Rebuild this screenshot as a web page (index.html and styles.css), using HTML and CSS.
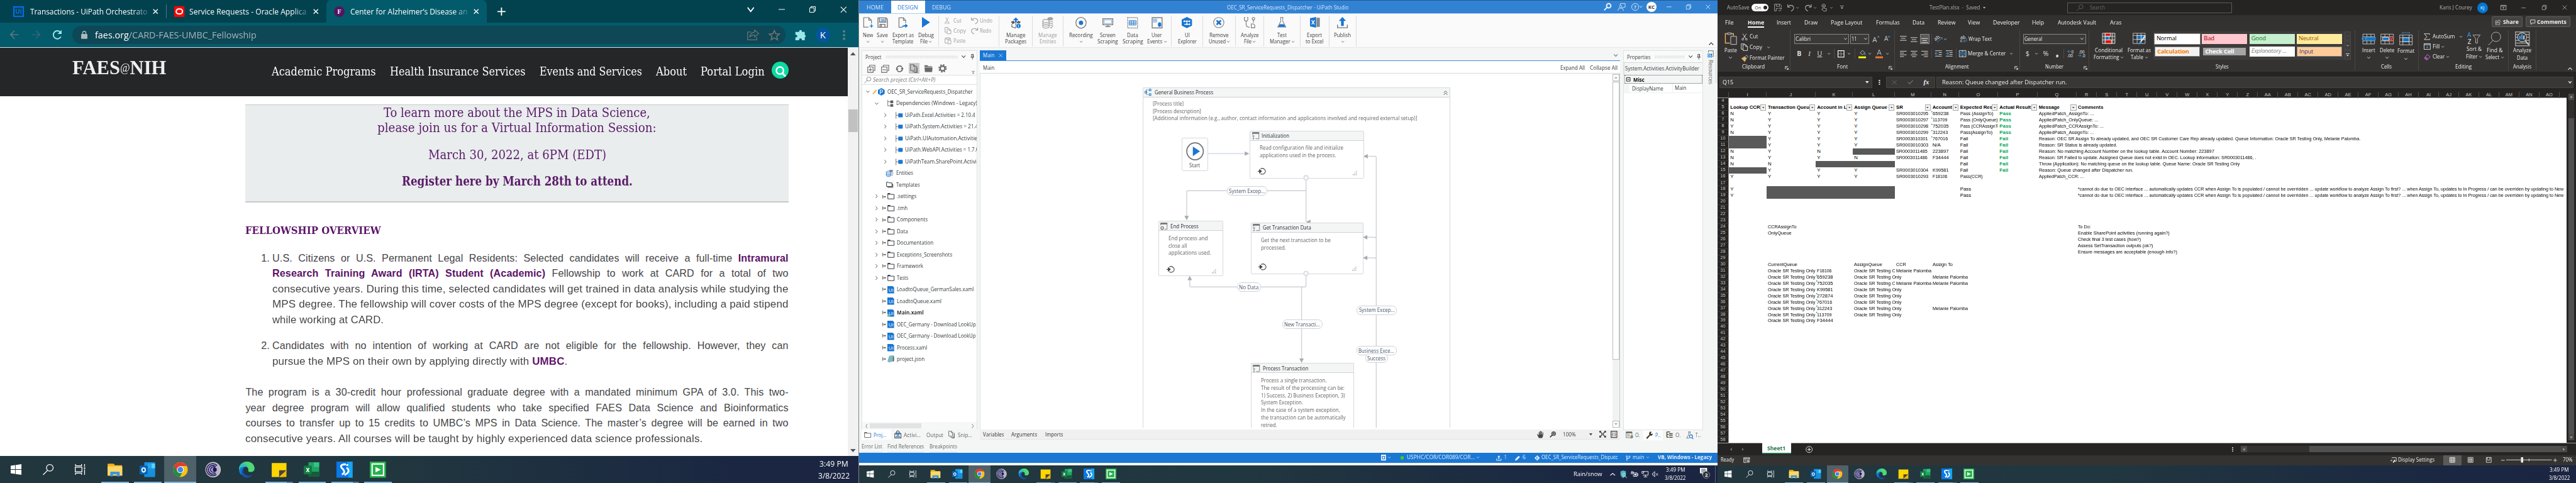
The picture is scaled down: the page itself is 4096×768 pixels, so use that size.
FILE: index.html
```html
<!DOCTYPE html>
<html lang="en">
<head>
<meta charset="utf-8">
<title>Desktop</title>
<link rel="stylesheet" href="styles.css">
</head>
<body>
<main class="desk">

<section class="screen chrome">
  <div class="tabs">
    <i data-i="uitab" data-w="24" data-h="24" data-m="30"></i><span class="f fade" data-w="262" data-m="13">Transactions - UiPath Orchestrato</span><i data-i="x" data-w="12" data-h="12" data-m="13" class="bold"></i>
    <span class="tabsep"></span>
    <i data-i="oracle" data-w="23" data-h="24" data-m="17"></i><span class="f fade" data-w="262" data-m="11">Service Requests - Oracle Applica</span><i data-i="x" data-w="12" data-h="12" data-m="14" class="bold"></i>
    <div class="tab-on"><span class="fav">F</span><span class="f fade" data-w="262" data-m="12">Center for Alzheimer’s Disease an</span><i data-i="x" data-w="12" data-h="12" data-m="14" class="bold"></i></div>
    <i data-i="plus" data-w="18" data-h="18" data-m="24"></i>
    <div class="winctl"><i data-i="chev" data-w="16" data-h="12"></i><i data-i="min" data-w="14" data-h="14"></i><i data-i="restore" data-w="14" data-h="14"></i><i data-i="x" data-w="15" data-h="15"></i></div>
  </div>
  <div class="tools">
    <i class="dim" data-i="back" data-w="20" data-h="20" data-m="23"></i><i class="dimmer" data-i="fwd" data-w="20" data-h="20" data-m="28"></i><i class="mint" data-i="reload" data-w="24" data-h="24" data-m="26"></i>
    <div class="url"><i data-i="lock" data-w="14" data-h="18" data-m="20"></i><span class="f" data-w="361" data-m="16"><span class="host">faes.org</span>/CARD-FAES-UMBC_Fellowship</span>
      <div class="urlend"><i data-i="share" data-w="27" data-h="24"></i><i data-i="star" data-w="26" data-h="24"></i></div></div>
    <i class="mint" data-i="puzzle" data-w="25" data-h="25" data-m="20"></i><span class="kcirc">K</span><i class="dim" data-i="dots" data-w="6" data-h="22" data-m="28"></i>
  </div>
  <div class="view">
    <div class="page">
      <header class="faes">
        <span class="f logo" data-w="210" data-m="162">FAES<span class="at">@</span>NIH</span>
        <span class="f" data-w="233" data-m="235">Academic Programs</span><span class="f" data-w="303" data-m="32">Health Insurance Services</span><span class="f" data-w="229" data-m="32">Events and Services</span><span class="f" data-w="69" data-m="31">About</span><span class="f" data-w="143" data-m="31">Portal Login</span>
        <i class="find" data-i="findc" data-w="38" data-h="38" data-m="16"></i>
      </header>
      <div class="promo">
        <p><span class="f" data-w="596">To learn more about the MPS in Data Science,</span><br><span class="f" data-w="624">please join us for a Virtual Information Session:</span></p>
        <p><span class="f" data-w="398">March 30, 2022, at 6PM (EDT)</span></p>
        <p><b class="f" data-w="516">Register here by March 28th to attend.</b></p>
      </div>
      <h2><span class="f" data-w="303">FELLOWSHIP OVERVIEW</span></h2>
      <ol class="terms">
        <li><p class="j">U.S. Citizens or U.S. Permanent Legal Residents: Selected candidates will receive a full-time <b>Intramural</b></p><p class="j"><b>Research Training Award (IRTA) Student (Academic)</b> Fellowship to work at CARD for a total of two</p><p class="j"><span class="f" data-w="1154">consecutive years. During this time, selected candidates will get trained in data analysis while studying the</span></p><p class="j"><span class="f" data-w="1154">MPS degree. The fellowship will cover costs of the MPS degree (except for books), including a paid stipend</span></p><p><span class="f" data-w="249">while working at CARD.</span></p></li>
        <li><p class="j">Candidates with no intention of working at CARD are not eligible for the fellowship. However, they can</p><p><span class="f" data-w="660">pursue the MPS on their own by applying directly with <b>UMBC</b>.</span></p></li>
      </ol>
      <div class="para"><p class="j">The program is a 30-credit hour professional graduate degree with a mandated minimum GPA of 3.0. This two-</p><p class="j">year degree program will allow qualified students who take specified FAES Data Science and Bioinformatics</p><p class="j">courses to transfer up to 15 credits to UMBC’s MPS in Data Science. The master’s degree will be earned in two</p><p><span class="f" data-w="1023">consecutive years. All courses will be taught by highly experienced data science professionals.</span></p></div>
    </div>
    <div class="vsb"><i data-i="up" data-w="12" data-h="7"></i><span class="thumb"></span><i class="end" data-i="down" data-w="12" data-h="7"></i></div>
  </div>
  <footer class="taskbar large" data-tray="clock"></footer>
</section>

<section class="screen ui">
  <div class="ui-title">
    <span class="utab"><span class="f" data-w="38">HOME</span></span><span class="utab on"><span class="f" data-w="46">DESIGN</span></span><span class="utab"><span class="f" data-w="42">DEBUG</span></span>
    <span class="f ttl" data-w="272" data-m="600">OEC_SR_ServiceRequests_Dispatcher - UiPath Studio</span>
    <div class="ui-ctl"><i data-i="mag" data-w="17" data-h="17" class="w3"></i><i data-i="feedback" data-w="18" data-h="17" data-m="15"></i><i data-i="help" data-w="17" data-h="17" data-m="12"></i><i data-i="chev" data-w="6" data-h="5" data-m="2"></i><span class="kc">KC</span><i data-i="min" data-w="11" data-h="11" data-m="22"></i><i data-i="restore" data-w="11" data-h="11" data-m="33"></i><i data-i="x" data-w="11" data-h="11" data-m="33"></i></div>
  </div>
  <div class="ui-ribbon" id="uiribbon"></div>
  <div class="ui-body">
    <div class="proj">
      <div class="phead"><span class="f" data-w="36">Project</span><span class="grip" data-w="162"></span><i data-i="chev" data-w="9" data-h="6" data-m="9"></i><i data-i="pin" data-w="9" data-h="12" data-m="10"></i></div>
      <div class="ptools"><i data-i="plusbox" data-w="18" data-h="18"></i><i data-i="minusbox" data-w="18" data-h="18"></i><i data-i="sync" data-w="18" data-h="18"></i><span class="sel"><i data-i="files" data-w="18" data-h="20"></i></span><i data-i="folderf" data-w="18" data-h="16"></i><i data-i="gear" data-w="19" data-h="19"></i><i class="more" data-i="qat" data-w="7" data-h="7"></i></div>
      <div class="psearch"><i data-i="magl" data-w="16" data-h="15"></i><span class="f" data-w="140" data-m="4">Search project (Ctrl+Alt+P)</span></div>
      <div class="tree" id="tree"></div>
      <div class="hsb"><i data-i="chevl" data-w="5" data-h="10"></i><span class="thumb"></span><i data-i="chevr" data-w="5" data-h="10"></i></div>
      <div class="ptabs"><span class="pt on"><i data-i="folder" data-w="16" data-h="13"></i><span class="f" data-w="29" data-m="5">Proj...</span></span><i data-i="bag" data-w="16" data-h="17" data-m="7"></i><span class="f" data-w="38" data-m="5">Activi...</span><span class="f" data-w="38" data-m="12">Output</span><i data-i="files" data-w="15" data-h="17" data-m="12"></i><span class="f" data-w="32" data-m="6">Snip...</span></div>
    </div>
    <div class="doc">
      <div class="dtabs"><span class="dtab"><span class="f" data-w="26">Main</span><i data-i="x" data-w="9" data-h="9" data-m="9"></i></span><i class="dchev" data-i="chev" data-w="9" data-h="6"></i></div>
      <div class="crumb"><span class="f" data-w="26">Main</span><span class="crumb-r"><span class="f" data-w="55">Expand All</span><span class="f" data-w="62" data-m="10">Collapse All</span></span></div>
      <div class="cwrap"><div class="canvas" id="canvas"></div>
        <div class="csb"><span class="btn"><i data-i="up" data-w="7" data-h="4"></i></span><span class="th"></span><span class="btn dn"><i data-i="down" data-w="7" data-h="4"></i></span></div></div>
      <div class="vars"><span class="f" data-w="47">Variables</span><span class="f" data-w="58" data-m="17">Arguments</span><span class="f" data-w="40" data-m="18">Imports</span>
        <span class="vr"><i data-i="hand" data-w="15" data-h="16"></i><i data-i="magr" data-w="14" data-h="14" data-m="13"></i><span class="f" data-w="29" data-m="15">100%</span><i data-i="down" data-w="7" data-h="5" data-m="30"></i><i data-i="fit" data-w="15" data-h="15" data-m="15"></i><i data-i="over" data-w="15" data-h="16" data-m="11"></i></span></div>
    </div>
    <div class="props">
      <div class="phead"><span class="f" data-w="53">Properties</span><span class="grip" data-w="67"></span><i data-i="chev" data-w="9" data-h="6" data-m="9"></i><i data-i="pin" data-w="9" data-h="12" data-m="9"></i></div>
      <div class="ptype"><span class="f" data-w="166">System.Activities.ActivityBuilder</span></div>
      <div class="pcat"><i data-i="mbox" data-w="9" data-h="9"></i><b class="f" data-w="25" data-m="7">Misc</b></div>
      <div class="prow"><span class="pk"><span class="f" data-w="70">DisplayName</span></span><span class="pv"><span class="f" data-w="26">Main</span></span></div>
      <div class="pfill"></div>
      <div class="rtabs"><i data-i="obj" data-w="16" data-h="16" data-m="5"></i><span class="f" data-w="11" data-m="6">O.</span><span class="pt2"><i data-i="wrench" data-w="16" data-h="17"></i><span class="f" data-w="12" data-m="4">P..</span></span><i data-i="outline" data-w="16" data-h="15" data-m="7"></i><span class="f" data-w="12" data-m="5">O.</span><i data-i="flaskq" data-w="16" data-h="17" data-m="12"></i><span class="f" data-w="12" data-m="5">T...</span></div>
    </div>
    <div class="side"><div class="sidein"><i data-i="res" data-w="14" data-h="16"></i><span class="vert">Resources</span></div><span class="strip"></span></div>
  </div>
  <div class="errs"><span class="e"><span class="f" data-w="46">Error List</span></span><span class="e"><span class="f" data-w="82">Find References</span></span><span class="e"><span class="f" data-w="62">Breakpoints</span></span></div>
  <div class="ustat"><i data-i="robot" data-w="11" data-h="13" data-m="1167"></i><i data-i="chev" data-w="6" data-h="4" data-m="4"></i><span class="gdot"></span><span class="f" data-w="152" data-m="6">USPHC/COR/COR089/COR...</span><i data-i="chev" data-w="6" data-h="4" data-m="5"></i><i data-i="upload" data-w="12" data-h="12" data-m="37"></i><span class="f" data-w="5" data-m="6">1</span><i data-i="pencil" data-w="12" data-h="12" data-m="19"></i><span class="f" data-w="7" data-m="5">6</span><i data-i="git" data-w="12" data-h="12" data-m="20"></i><span class="f" data-w="171" data-m="3">OEC_SR_ServiceRequests_Dispatc</span><i data-i="branch" data-w="11" data-h="12" data-m="18"></i><span class="f" data-w="26" data-m="4">main</span><i data-i="chev" data-w="6" data-h="4" data-m="5"></i><b class="f" data-w="121" data-m="19">VB, Windows - Legacy</b></div>
  <footer class="taskbar" data-tray="full"></footer>
</section>

<section class="screen xl">
  <div class="x-title"><span class="f" data-w="50" data-m="21">AutoSave</span><span class="toggle">On<span class="knob"></span></span><i data-i="savex" data-w="17" data-h="17" data-m="12"></i><i data-i="undo" data-w="15" data-h="17" data-m="13"></i><i data-i="chev" data-w="6" data-h="4" data-m="5"></i><i data-i="redo" data-w="15" data-h="17" data-m="13"></i><i data-i="chev" data-w="6" data-h="4" data-m="5"></i><i data-i="touch" data-w="13" data-h="17" data-m="10"></i><i data-i="chev" data-w="6" data-h="4" data-m="8"></i><i data-i="qat" data-w="8" data-h="8" data-m="16"></i>
    <span class="f ttl" data-w="113" data-m="192">TestPlan.xlsx&nbsp; -&nbsp; Saved</span><i data-i="down" data-w="6" data-h="4" data-m="6"></i>
    <div class="xsearch"><i data-i="magl" data-w="15" data-h="15" data-m="19"></i><span class="f" data-w="34" data-m="15">Search</span></div>
    <span class="f ttl" data-w="73" data-m="464">Karis J Courey</span><span class="kj">KJ</span><i data-i="ribup" data-w="13" data-h="11" data-m="28"></i><i data-i="min" data-w="10" data-h="10" data-m="34"></i><i data-i="restore" data-w="10" data-h="11" data-m="36"></i><i data-i="x" data-w="11" data-h="11" data-m="36"></i></div>
  <div class="x-tabs"><span class="f" data-w="19" data-m="17">File</span><b class="home"><span class="f" data-w="37">Home</span></b><span class="f" data-w="32" data-m="28">Insert</span><span class="f" data-w="30" data-m="29">Draw</span><span class="f" data-w="71" data-m="30">Page Layout</span><span class="f" data-w="53" data-m="30">Formulas</span><span class="f" data-w="27" data-m="29">Data</span><span class="f" data-w="40" data-m="29">Review</span><span class="f" data-w="27" data-m="28">View</span><span class="f" data-w="60" data-m="28">Developer</span><span class="f" data-w="27" data-m="28">Help</span><span class="f" data-w="86" data-m="31">Autodesk Vault</span><span class="f" data-w="26" data-m="30">Aras</span>
    <span class="xbtns"><b class="xbtn" data-w="68"><i data-i="share" data-w="12" data-h="12"></i><span class="f" data-w="35" data-m="4">Share</span></b><b class="xbtn" data-w="100"><i data-i="comment" data-w="12" data-h="12"></i><span class="f" data-w="66" data-m="4">Comments</span></b></span></div>
  <div class="x-ribbon">
    <div class="grp" data-w="164">
      <div class="gbody"><div class="big" data-w="31" data-m="14"><i data-i="paste" data-w="28" data-h="32"></i><span class="f" data-w="28">Paste</span><i class="cv" data-i="chev" data-w="7" data-h="5"></i></div>
        <div class="stack tall" data-m="7"><div><i data-i="cut" data-w="14" data-h="16" data-m="2"></i><span class="f" data-w="19" data-m="4">Cut</span></div><div><i data-i="copyx" data-w="16" data-h="17"></i><span class="f" data-w="28" data-m="4">Copy</span><i data-i="chev" data-w="6" data-h="4" data-m="11"></i></div><div><i data-i="brush" data-w="17" data-h="16"></i><span class="f" data-w="78" data-m="3">Format Painter</span></div></div></div>
      <div class="glabel"><span class="f" data-w="51">Clipboard</span><i data-i="launch" data-w="8" data-h="8"></i></div></div>
    <div class="grp" data-w="233">
      <div class="gcol"><div class="r1"><span class="combo" data-w="122" data-m="8"><span class="f" data-w="34">Calibri</span><i data-i="chev" data-w="7" data-h="5"></i></span><span class="combo" data-w="43" data-m="3"><span class="f" data-w="12">11</span><i data-i="chev" data-w="7" data-h="5"></i></span><span class="agrow" data-m="7">A<i data-i="caretup" data-w="5" data-h="4"></i></span><span class="agrow sm" data-m="11">A<i data-i="caretdn" data-w="5" data-h="4"></i></span></div>
        <div class="r2"><b class="gl" data-w="10" data-m="14">B</b><em class="gl ser" data-w="10" data-m="13">I</em><u class="gl" data-w="12" data-m="12">U</u><i data-i="chev" data-w="6" data-h="4" data-m="11"></i><span class="vs" data-m="9"></span><i data-i="border" data-w="15" data-h="16" data-m="7"></i><i data-i="chev" data-w="6" data-h="4" data-m="8"></i><span class="vs" data-m="9"></span><i data-i="fill" data-w="17" data-h="21" data-m="7"></i><i data-i="chev" data-w="6" data-h="4" data-m="6"></i><i data-i="fontc" data-w="17" data-h="21" data-m="10"></i><i data-i="chev" data-w="6" data-h="4" data-m="6"></i></div></div>
      <div class="glabel"><span class="f" data-w="24">Font</span><i data-i="launch" data-w="8" data-h="8"></i></div></div>
    <div class="grp" data-w="280">
      <div class="gcol"><div class="r1"><i data-i="altop" data-w="15" data-h="16" data-m="11"></i><i data-i="almid" data-w="15" data-h="16" data-m="9"></i><span class="hl" data-m="6"><i data-i="albot" data-w="15" data-h="16"></i></span><span class="vs" data-m="4"></span><i data-i="orient" data-w="18" data-h="17" data-m="6"></i><i data-i="chev" data-w="6" data-h="4" data-m="3"></i><i data-i="wrap" data-w="15" data-h="17" data-m="31"></i><span class="f" data-w="52" data-m="3">Wrap Text</span></div>
        <div class="r2"><i data-i="alleft" data-w="15" data-h="16" data-m="11"></i><i data-i="alcen" data-w="15" data-h="16" data-m="9"></i><i data-i="alright" data-w="15" data-h="16" data-m="9"></i><span class="vs" data-m="8"></span><i data-i="outd" data-w="15" data-h="14" data-m="7"></i><i data-i="ind" data-w="15" data-h="14" data-m="9"></i><span class="vs" data-m="7"></span><i data-i="merge" data-w="16" data-h="15" data-m="7"></i><span class="f" data-w="85" data-m="3">Merge &amp; Center</span><i data-i="chev" data-w="6" data-h="4" data-m="10"></i></div></div>
      <div class="glabel"><span class="f" data-w="53">Alignment</span><i data-i="launch" data-w="8" data-h="8"></i></div></div>
    <div class="grp" data-w="155">
      <div class="gcol"><div class="r1"><span class="combo" data-w="140" data-m="7"><span class="f" data-w="40">General</span><i data-i="chev" data-w="7" data-h="5"></i></span></div>
        <div class="r2"><span class="gl" data-w="9" data-m="12">$</span><i data-i="chev" data-w="6" data-h="4" data-m="12"></i><span class="gl" data-w="17" data-m="10">%</span><b class="gl ser" data-w="8" data-m="13">❟</b><span class="vs" data-m="10"></span><i data-i="decup" data-w="16" data-h="18" data-m="8"></i><i data-i="decdn" data-w="16" data-h="18" data-m="8"></i></div></div>
      <div class="glabel"><span class="f" data-w="41">Number</span><i data-i="launch" data-w="8" data-h="8"></i></div></div>
    <div class="grp" data-w="594">
      <div class="gbody"><div class="big" data-w="70" data-m="8"><i data-i="cond" data-w="28" data-h="32"></i><span class="f" data-w="62">Conditional</span><span class="ln"><span class="f" data-w="57">Formatting</span><i data-i="chev" data-w="6" data-h="4" data-m="4"></i></span></div><div class="big" data-w="58" data-m="5"><i data-i="ftable" data-w="30" data-h="32"></i><span class="f" data-w="52">Format as</span><span class="ln"><span class="f" data-w="28">Table</span><i data-i="chev" data-w="6" data-h="4" data-m="4"></i></span></div>
        <div class="gallery"><div class="sw"><span class="s-normal">Normal</span><span class="s-bad">Bad</span><span class="s-good">Good</span><span class="s-neutral">Neutral</span><b class="s-calc">Calculation</b><b class="s-check">Check Cell</b><em class="s-expl">Explanatory ...</em><span class="s-input">Input</span></div><div class="gsb"><span><i class="dimmer" data-i="caretw" data-w="6" data-h="4"></i></span><span><i data-i="chev" data-w="6" data-h="4"></i></span><span><i data-i="qat" data-w="8" data-h="7"></i></span></div></div></div>
      <div class="glabel"><span class="f" data-w="29">Styles</span></div></div>
    <div class="grp" data-w="143"><div class="gbody"><div class="big" data-w="36" data-m="12"><i data-i="insc" data-w="32" data-h="32"></i><span class="f" data-w="29">Insert</span><i class="cv" data-i="chev" data-w="7" data-h="5"></i></div><div class="big" data-w="40" data-m="4"><i data-i="delc" data-w="30" data-h="32"></i><span class="f" data-w="33">Delete</span><i class="cv" data-i="chev" data-w="7" data-h="5"></i></div><div class="big" data-w="40" data-m="2"><i data-i="fmtc" data-w="30" data-h="34"></i><span class="f" data-w="38">Format</span><i class="cv" data-i="chev" data-w="7" data-h="5"></i></div></div><div class="glabel"><span class="f" data-w="24">Cells</span></div></div>
    <div class="grp" data-w="200"><div class="gbody"><div class="stack" data-m="11"><div><i data-i="sigma" data-w="14" data-h="15"></i><span class="f" data-w="50" data-m="6">AutoSum</span><i data-i="chev" data-w="6" data-h="4" data-m="10"></i></div><div><i data-i="filld" data-w="15" data-h="14"></i><span class="f" data-w="16" data-m="5">Fill</span><i data-i="chev" data-w="6" data-h="4" data-m="3"></i></div><div><i data-i="eraser" data-w="15" data-h="14"></i><span class="f" data-w="27" data-m="5">Clear</span><i data-i="chev" data-w="6" data-h="4" data-m="3"></i></div></div>
      <div class="big" data-w="40" data-m="6"><i data-i="sort" data-w="30" data-h="30"></i><span class="f" data-w="34">Sort &amp;</span><span class="ln"><span class="f" data-w="26">Filter</span><i data-i="chev" data-w="6" data-h="4" data-m="4"></i></span></div><div class="big" data-w="44" data-m="4"><i data-i="maglb" data-w="30" data-h="32"></i><span class="f" data-w="36">Find &amp;</span><span class="ln"><span class="f" data-w="31">Select</span><i data-i="chev" data-w="6" data-h="4" data-m="4"></i></span></div></div><div class="glabel"><span class="f" data-w="37">Editing</span></div></div>
    <div class="grp" data-w="62"><div class="gbody"><div class="big" data-w="62"><i data-i="analyze" data-w="33" data-h="33"></i><span class="f" data-w="41">Analyze</span><span class="f" data-w="24">Data</span></div></div><div class="glabel"><span class="f" data-w="41">Analysis</span></div></div>
    <i class="xcol" data-i="caretw" data-w="10" data-h="6"></i>
  </div>
  <div class="fbar"><span class="nbox"><span class="f" data-w="24">Q15</span><i data-i="down" data-w="8" data-h="5"></i></span><i data-i="dots" data-w="4" data-h="11" data-m="14"></i><span class="fxb"><i class="dim2" data-i="x" data-w="12" data-h="11"></i><i class="dim2" data-i="check" data-w="13" data-h="10"></i><em class="fx">fx</em></span><span class="fin"><span class="f" data-w="279">Reason: Queue changed after Dispatcher run.</span><i class="bold" data-i="chev" data-w="7" data-h="5"></i></span></div>
  <div class="sheetwrap"><div class="sheet" id="sheet"></div><div class="xvs"><span class="xb"><i data-i="up" data-w="7" data-h="5"></i></span><span class="xt"></span><span class="xb"><i data-i="down" data-w="7" data-h="5"></i></span></div></div>
  <div class="stabs"><i class="dim2" data-i="left" data-w="4" data-h="7" data-m="28"></i><i class="dim2" data-i="right" data-w="4" data-h="7" data-m="24"></i><b class="st"><span class="f" data-w="41">Sheet1</span></b><i data-i="addc" data-w="16" data-h="16" data-m="33"></i><i data-i="dots" data-w="3" data-h="10" data-m="937"></i><div class="xhs"><span class="xb2"><i data-i="left" data-w="5" data-h="7"></i></span><span class="xh"></span><span class="xb2"><i data-i="right" data-w="5" data-h="7"></i></span></div></div>
  <div class="xstat"><span class="f" data-w="30" data-m="8">Ready</span><i data-i="macro" data-w="15" data-h="13" data-m="20"></i>
    <span class="xsr"><i data-i="disp" data-w="14" data-h="13"></i><span class="f" data-w="82" data-m="3">Display Settings</span><span class="vw on"><i data-i="grid" data-w="12" data-h="12"></i></span><span class="vw"><i data-i="pagel" data-w="12" data-h="12"></i></span><span class="vw"><i data-i="pageb" data-w="12" data-h="12"></i></span><i data-i="minus" data-w="8" data-h="8" data-m="6"></i><i data-i="slider" data-w="102" data-h="12" data-m="4"></i><i data-i="plusth" data-w="8" data-h="8" data-m="4"></i><span class="f" data-w="22" data-m="12">70%</span></span></div>
  <footer class="taskbar" data-tray="clock"></footer>
</section>

</main>
<script src="app.js"></script>
</body>
</html>
```
FILE: styles.css
```css
*{box-sizing:border-box}
body{margin:0;overflow:hidden;background:#fff;font-family:"Open Sans","Noto Sans",sans-serif;line-height:1}
.desk{zoom:.711111;width:5760px;height:1080px;display:grid;grid-template-columns:repeat(3,1920px);overflow:hidden}
.screen{height:1080px;width:1920px;display:flex;flex-direction:column;overflow:hidden;position:relative}
p,ol,h2{margin:0;padding:0;font-weight:normal}
i{display:inline-block;flex:none;font-style:normal}
i svg{display:block;width:100%;height:100%;overflow:visible}
.f{display:inline-block;white-space:nowrap;flex:none}
.f>.in{display:inline-block;transform-origin:0 50%;white-space:nowrap}
.bold svg{stroke-width:2}

/* browser */
.chrome{background:#fff}
.tabs{height:51px;flex:none;background:#02424f;color:#fff;display:flex;align-items:center;font-size:18px}
.fade{-webkit-mask-image:linear-gradient(90deg,#000 88%,rgba(0,0,0,.25));mask-image:linear-gradient(90deg,#000 88%,rgba(0,0,0,.25));line-height:26px}
.tabsep{width:1px;height:30px;background:#4d7b84;margin-left:18px}
.tab-on{height:51px;width:359px;margin-left:18px;background:#035a6b;border-radius:11px 11px 0 0;display:flex;align-items:center;padding-left:17px}
.fav{width:24px;height:24px;border-radius:50%;background:#52165f;font:bold 14px/24px "Liberation Serif",serif;text-align:center}
.winctl{margin-left:auto;padding-right:26px;display:flex;align-items:center;gap:55px;margin-bottom:9px}
.tools{height:54px;flex:none;background:#035a6b;display:flex;align-items:center;color:#fff}
.dim{color:#6a7c80}.dimmer{color:#34697a}.mint{color:#9be8ea}.dim2{color:#6f6f6f}
.url{width:1595px;height:42px;border-radius:21px;background:#0e4755;margin-left:21px;display:flex;align-items:center;font-size:21px;line-height:30px;color:#a3b6bb}
.host{color:#fff}
.urlend{margin-left:auto;display:flex;gap:21px;padding-right:13px;color:#6a7377}
.kcirc{width:32px;height:32px;border-radius:50%;background:#04559f;margin-left:22px;text-align:center;font-size:21px;line-height:32px}
.view{height:915px;flex:none;display:flex;border-top:2px solid #dee1e6}
.page{width:1895px}
.faes{height:109px;background:#252628;color:#fff;display:flex;align-items:center;font:25px/30px "DejaVu Serif Condensed","DejaVu Serif",serif}
.logo{font:bold 45px/50px "Liberation Serif",serif;color:#efefef;margin-bottom:17px}
.at{font-weight:normal;font-size:25px;vertical-align:5px}
.find{margin-bottom:8px}
.promo{margin:18px 0 0 549px;width:1214px;height:220px;background:#e9eded;border-top:2px solid #c9cbcb;border-bottom:4px solid #c9c9c9;text-align:center;color:#5a1a69;font:29px/34.5px "DejaVu Serif Condensed","DejaVu Serif",serif}
.promo p+p{margin-top:25px}
.promo .f{vertical-align:top;text-align:left}
h2{margin:47px 0 0 549px;font:bold 24.5px/30px "DejaVu Serif Condensed","DejaVu Serif",serif;color:#5c1368}
h2 .f,.terms .f,.para .f{vertical-align:top}
.terms,.para{font:22.7px/34.4px "Liberation Sans",Arial,sans-serif;color:#454547;letter-spacing:.15px}
.terms{margin:29px 0 0 549px;width:1214px;list-style:none;counter-reset:n}
.terms li{padding-left:60px;counter-increment:n;position:relative}
.terms li::before{content:counter(n) ".";position:absolute;left:35px;top:0}
.terms li+li{margin-top:24px}
.terms b{color:#5c1368}
.para{margin:35px 0 0 549px;width:1214px;line-height:34.8px}
.j{text-align:justify;text-align-last:justify;white-space:nowrap}
.vsb{width:25px;background:#f1f1f1;display:flex;flex-direction:column;align-items:center;color:#505050;padding:10px 0 9px}
.vsb .thumb{width:21px;height:51px;background:#c1c1c1;margin-top:121px}
.vsb .end{margin-top:auto}

/* taskbar */
.taskbar{height:40px;flex:none;display:flex;align-items:stretch;background:linear-gradient(90deg,#22363e,#21373f 45%,#1b2742 85%,#1b2541);color:#fff;font-size:12px;margin-top:auto}
.taskbar.large{zoom:1.5;width:1280px}
.tb{width:48px;display:flex;align-items:center;justify-content:center;position:relative;flex:none}
.tb.app{margin-left:1px}
.tb.first{margin-left:3px}
.tb.hot{background:#4f6169}
.tb.run::after{content:"";position:absolute;left:4px;right:3px;bottom:0;height:2px;background:#76b9ed}
.tb.hot.run::after{left:0;right:0}
.tb.two::after{right:12px;box-shadow:9px 0 0 #5585ad}
.tray{margin-left:auto;display:flex;align-items:center}
.clock{width:74px;text-align:center;line-height:18px;padding-top:1px}
.clock .f{vertical-align:top;text-align:left}
.notif{position:relative;width:18px;margin:0 0 8px 18px}
.badge{position:absolute;left:6px;top:6px;width:17px;height:17px;border-radius:50%;background:#2b2f38;border:1px solid #888;font:bold 11px/15px "Open Sans",sans-serif;text-align:center}
.peek{width:1px;height:40px;background:#5a6377;margin:0 4px 0 16px}

/* studio */
.ui{background:#f4f6f6;font-size:13px;color:#33373b;border-left:1px solid #7d8488}
.ui-title{height:30px;flex:none;background:#3282d3;border-top:1px solid #245a8f;display:flex;align-items:center;color:#d9e9f8}
.utab{height:29px;display:flex;align-items:center;padding:0 17px 0 16px}
.utab.on{background:#fff;color:#2b7cd3;padding:0 15px}
.ui-ctl{margin-left:570px;display:flex;align-items:center;color:#e6f1fb}
.w3 svg{stroke-width:2.6}
.kc{width:23px;height:23px;border-radius:50%;background:#fff;color:#333;font:bold 11px/23px "Open Sans",sans-serif;text-align:center;margin-left:9px}
.ui-ribbon{height:77px;flex:none;background:#fafafa;border-bottom:2px solid #e6e8e8;border-top:1px solid #a9cdf0;display:flex;color:#3c3c3c}
.ugrp{display:flex;border-right:1px solid #dcdcdc;margin:4px 0 2px;flex:none}
.ub{display:flex;flex-direction:column;align-items:center;padding-top:2px;flex:none}
.ub .icb{height:26px;display:flex;align-items:center;margin-bottom:7px}
.ln{display:flex;align-items:center;height:15px}
.ub.off{color:#9b9b9b}
.clip{display:grid;grid-template-columns:59px 60px;grid-auto-rows:22px;align-items:center;color:#9b9b9b}
.clip div{display:flex;align-items:center}
.ribend{margin:auto 8px 4px auto}
.ui-body{height:871px;flex:none;display:flex;padding:5px 0 0 5px}
.proj{width:259px;display:flex;flex-direction:column;background:#fafafa;border:1px solid #e0e2e2;border-bottom:0;height:871px}
.phead{height:26px;flex:none;display:flex;align-items:center;padding:2px 0 0 7px;color:#3c3c3c}
.grip{height:7px;margin-left:9px;background:radial-gradient(circle,#c2c2c2 .9px,transparent 1.1px) 0 0/4px 4px,radial-gradient(circle,#c2c2c2 .9px,transparent 1.1px) 2px 2px/4px 4px}
.ptools{height:29px;flex:none;display:flex;align-items:center;padding-left:11px;gap:14px;color:#69696b;border-bottom:1px solid #dcdede}
.ptools .sel{width:24px;height:24px;background:#c9c9cb;display:flex;align-items:center;justify-content:center;margin:0 -3px}
.ptools .more{margin:auto 4px 1px auto}
.psearch{height:22px;flex:none;display:flex;align-items:center;padding-left:4px;background:#fff;border-bottom:1px solid #dcdede;font-style:italic;color:#777}
.tree{flex:1;background:#fff;overflow:hidden;padding-top:2px}
.tr{display:flex;align-items:center;height:26px;white-space:nowrap;overflow:hidden;line-height:20px}
.hsb{height:17px;flex:none;display:flex;align-items:center;padding:0 7px;background:#f6f7f7;color:#666}
.hsb .thumb{width:116px;height:11px;background:#e1e3e4;margin:0 auto 0 5px}
.ptabs{height:22px;flex:none;display:flex;align-items:center;background:#f4f6f6;color:#666;margin:0 -1px}
.pt{width:66px;height:22px;background:#fff;display:flex;align-items:center;padding-left:6px;color:#69696b}
.pt .f{color:#2b7cd3}
.doc{width:1431px;margin-left:6px;display:flex;flex-direction:column;height:871px}
.dtabs{height:25px;flex:none;display:flex;align-items:center;border-bottom:2px solid #3f8ad9;color:#666}
.dtab{width:58px;height:23px;background:#1b77d4;color:#e8f2fc;display:flex;align-items:center;padding-left:7px}
.dchev{margin:0 5px 0 auto}
.crumb{height:28px;flex:none;background:#fff;border-bottom:1px solid #d9dbdb;display:flex;align-items:center;padding:2px 6px 0 7px}
.crumb-r{margin-left:auto;display:flex}
.cwrap{height:796px;flex:none;display:flex;background:#fff;border-left:1px solid #dfe1e1}
.canvas{width:1413px;position:relative;overflow:hidden;height:791px}
.csb{width:17px;background:#f1f2f2;height:791px;display:flex;flex-direction:column;padding-top:1px;border-right:1px solid #c9cbcb}
.csb .btn{width:16px;height:15px;border:1.5px solid #b9bbbd;background:#fff;display:flex;align-items:center;justify-content:center;color:#a0a0a0}
.csb .th{height:622px;border:1.5px solid #b9bbbd;background:#fff;margin-top:2px}
.csb .dn{margin-top:auto}
.vars{height:22px;flex:none;background:#f0f0f0;display:flex;align-items:center;padding:0 6px;border-bottom:1px solid #e2e4e4;color:#333}
.vr{margin-left:auto;display:flex;align-items:center;color:#444}
.props{width:179px;margin-left:7px;display:flex;flex-direction:column;border:1px solid #e0e2e2;border-bottom:0;background:#fafafa;height:871px}
.ptype{height:28px;flex:none;background:#f4f6f6;border-top:1px solid #d6d8d8;border-left:2px solid #d9dbdb;padding:6px 0 0 1px}
.pcat{height:20px;flex:none;background:#f4f6f6;border:1px dotted #555;display:flex;align-items:center;padding-left:3px;margin-left:1px;color:#000}
.prow{height:21px;flex:none;display:flex;background:#fff;border-bottom:1px solid #eee;border-left:13px solid #f4f6f6}
.pk{width:97px;border-right:1px solid #eee;padding:4px 0 0 6px}
.pv{padding:3px 0 0 4px}
.pfill{flex:1;background:#fff}
.rtabs{height:22px;flex:none;display:flex;align-items:center;background:#f4f6f6;border-top:1px solid #dfe1e1;color:#666;margin:0 -1px}
.pt2{width:43px;height:22px;background:#fff;display:flex;align-items:center;padding-left:6px;margin-left:7px;color:#3f3a30}
.pt2 .f{color:#2b7cd3}
.side{margin-left:auto;display:flex;width:26px}
.sidein{width:18px;display:flex;flex-direction:column;align-items:center;color:#666;margin-left:2px}
.vert{writing-mode:vertical-rl;font-size:12px;margin-top:5px;letter-spacing:-.3px}
.strip{width:5px;height:73px;background:#e6e8e9;margin-left:auto}
.errs{height:34px;flex:none;display:flex;gap:12px;padding:12px 0 0 5px;color:#666}
.errs .e{height:22px;padding-top:2px;border-bottom:4px solid #e8e9ea}
.ustat{height:23px;flex:none;background:#1b77d4;color:#e4f0fb;display:flex;align-items:center;line-height:18px}
.gdot{width:8px;height:8px;border-radius:50%;background:#3ccf20;margin-left:22px}

/* workflow diagram */
.wires{position:absolute;left:0;top:0}
.node{position:absolute;border:1.5px solid #d6d8da;background:#fff;border-radius:2px;color:#636363}
.nh{height:21px;background:#f4f6f6;border-bottom:1.5px solid #cfd1d3;display:flex;align-items:center;padding-left:3px;color:#25292e}
.nh .f{margin-left:6px}
.nb{padding:8px 0 0 21px}
.nb div{height:16.6px;line-height:16.6px}
.nb .f{vertical-align:top}
.corner{position:absolute;left:16px;bottom:7px;color:#444}
.grips{position:absolute;right:15px;bottom:6px;color:#9a9a9a}
.open{border-bottom:0}
.outer .nb{padding-top:6px}
.start{display:flex;flex-direction:column;align-items:center;padding-top:9px;border-radius:4px;color:#444}
.start .f{margin-top:3px}
.pill{position:absolute;height:21px;border:1.5px solid #cfd1d3;border-radius:10px;background:#fff;display:flex;align-items:center;justify-content:center;color:#44546a}
.dbl{position:absolute;color:#555}

/* spreadsheet */
.xl{background:#252423;color:#f0f0f0;font-size:12.3px}
.x-title{height:34px;flex:none;background:#252423;color:#b5b3b1;display:flex;align-items:center}
.ttl{white-space:pre}
.toggle{width:38px;height:17px;border-radius:9px;background:#fff;color:#333;margin-left:6px;display:flex;align-items:center;justify-content:space-between;padding:0 3px 0 7px;font-size:10px}
.knob{width:9px;height:9px;border-radius:50%;background:#252423}
.xsearch{width:368px;height:24px;border:1px solid #5b5a58;margin-left:183px;display:flex;align-items:center;color:#6a6967}
.kj{width:24px;height:24px;border-radius:50%;background:#0078d4;color:#fff;margin-left:11px;font-size:10px;line-height:24px;text-align:center}
.x-tabs{height:33px;flex:none;background:linear-gradient(#31302f,#343332);display:flex;align-items:center;font-size:13.3px;color:#f3f2f1}
.home{height:24px;border-bottom:3px solid #fff;margin-left:32px;padding-top:5px}
.xbtns{margin-left:auto;display:flex;gap:8px;padding-right:12px;margin-top:-3px}
.xbtn{height:24px;border:1px solid #605e5c;background:#454443;border-radius:2px;display:flex;align-items:center;justify-content:center}
.x-ribbon{height:94px;flex:none;background:#343332;display:flex}
.grp{height:90px;position:relative;display:flex;flex-direction:column;flex:none;border-right:1px solid #484746}
.gbody{display:flex;height:77px;flex:none;padding-top:3px}
.big{display:flex;flex-direction:column;align-items:center;flex:none}
.big>i:first-child{margin-bottom:3px}
.big>.f,.big>.ln{height:16px;line-height:16px}
.big .f{line-height:16px}
.big .cv{margin-top:6px}
.stack{display:flex;flex-direction:column}
.stack>div{height:23px;display:flex;align-items:center}
.stack.tall>div{height:24px}
.glabel{height:13px;display:flex;justify-content:center;align-items:center;line-height:13px}
.glabel i{position:absolute;right:4px;bottom:1px}
.gcol{height:77px;flex:none}
.r1,.r2{display:flex;align-items:center}
.r1{height:41px}
.r2{height:24px}
.combo{height:23px;border:1px solid #8a8886;background:#3b3a39;display:flex;align-items:center;justify-content:space-between;padding:0 3px 0 2px;flex:none}
.agrow{font-size:16px;display:flex;color:#c8c6c4;align-items:flex-start}
.agrow.sm{font-size:14px}
.agrow i{color:#3a96dd}
.gl{font-size:15px;text-align:center;color:#dcdad8;flex:none;line-height:24px}
.ser{font-family:"Liberation Serif",serif}
.vs{width:1px;height:22px;background:#4b4a49;flex:none}
.hl{width:22px;height:23px;background:#5b5a58;border:1px solid #8a8886;display:flex;align-items:center;justify-content:center}
.gallery{width:442px;height:63px;background:#3d3c3b;display:flex;margin-left:2px}
.sw{width:427px;display:grid;grid-template-columns:repeat(4,101px);column-gap:5px;grid-template-rows:22px 22px;row-gap:6px;padding:6px 0 0 3px;font-size:13.3px}
.sw>*{line-height:20px;padding-left:4px;overflow:hidden;white-space:nowrap;letter-spacing:-.3px}
.s-normal{background:#fff;color:#000;outline:2px solid #8a8886;outline-offset:1px}
.s-bad{background:#ffc7ce;color:#9c0006}
.s-good{background:#c6efce;color:#127a1c}
.s-neutral{background:#ffeb9c;color:#9c5700}
.s-calc{background:#f2f2f2;color:#fa7d00;border:1px solid #7f7f7f}
.s-check{background:#a5a5a5;color:#fff;border:3px double #3f3f3f}
.sw .s-check{line-height:16px}
.s-expl{background:#fff;color:#7f7f7f}
.s-input{background:#ffcc99;color:#3f3f76;border:1px solid #7f7f7f}
.gsb{width:15px;display:flex;flex-direction:column;gap:1px}
.gsb span{flex:1;display:flex;align-items:center;justify-content:center;border:1px solid #4b4a49}
.xcol{margin:auto 8px 5px auto}
.fbar{height:26px;flex:none;display:flex;align-items:center;margin:10px 5px 0;font-size:13.3px}
.nbox{width:342px;height:26px;background:#383736;border:1px solid #454443;display:flex;align-items:center;justify-content:space-between;padding:0 6px}
.fxb{width:110px;height:26px;background:#383736;border:1px solid #454443;margin-left:12px;display:flex;align-items:center;justify-content:space-between;padding:0 12px}
.fx{font:italic bold 15px "Liberation Serif",serif}
.fin{flex:1;height:26px;background:#383736;border:1px solid #454443;margin-left:3px;display:flex;align-items:center;justify-content:space-between;padding:0 4px 0 11px}
.sheetwrap{height:793px;flex:none;display:flex;width:1920px}
.sheet{width:1899px;overflow:hidden;background:#252423;font:11px/14px "Liberation Sans",Arial,sans-serif;flex:none}
.cols{height:23px;padding-top:9px;display:flex;border-bottom:1px solid #9b9a99;color:#c8c6c4;width:1899px;font-size:10.5px}
.cols span{flex:none;text-align:center;border-right:1px solid #504f4e;height:13px;line-height:13px}
.row{display:flex;height:14px;background:#fff;color:#000}
.row.r16{height:15px}
.rn{width:26px;flex:none;background:#252423;color:#c8c6c4;text-align:center;border-right:1px solid #9b9a99;border-bottom:1px solid #3c3b3a;overflow:hidden;font-size:10px}
.c{flex:none;padding-left:3px;white-space:nowrap;display:flex;height:100%;position:relative}
.c.cut{overflow:hidden}
.c.g{background:#595959}
.c.ok{color:#00a651;font-weight:bold;letter-spacing:.2px}
.c.hd{font-weight:bold}
.hd .tx{flex:1;overflow:hidden}
.fb{width:13px;height:13px;background:#f3f3f3;border:1px solid #ababab;display:flex;align-items:center;justify-content:center;color:#444;flex:none;margin-right:1px}
.c.tri::before{content:"";position:absolute;left:1px;top:1px;border:2px solid transparent;border-top-color:#108040;border-left-color:#108040}
.xvs{width:13px;margin:12px 0 5px 4px;display:flex;flex-direction:column;background:#302f2e}
.xb{height:14px;background:#4a4948;display:flex;align-items:center;justify-content:center;color:#979593}
.xt{flex:1;background:#505050;margin:42px 0 1px}
.stabs{height:28px;flex:none;display:flex;align-items:center;border-top:1px solid #9b9a99}
.st{width:65px;height:25px;margin:-3px 0 0 40px;background:#fff;color:#217346;border-bottom:3px solid #217346;display:flex;align-items:center;justify-content:center;font-size:13px}
.xhs{width:729px;height:14px;margin-left:17px;background:#333231;display:flex;color:#979593}
.xb2{width:13px;background:#4a4948;display:flex;align-items:center;justify-content:center}
.xh{width:562px;background:#505050;margin:0 1px 0 auto}
.xstat{height:22px;flex:none;background:#343332;display:flex;align-items:center}
.xsr{margin-left:auto;display:flex;align-items:center;padding-right:8px}
.xsr .on{background:#5b5a58;margin-left:19px}
.vw{width:41px;height:22px;display:flex;align-items:center;justify-content:center}
```
FILE: app.js
```js
const S = (vb, body, extra = '') => `<svg viewBox="0 0 ${vb}" preserveAspectRatio="none" fill="none" stroke="currentColor" stroke-width="1.2" ${extra}>${body}</svg>`;
const fillc = 'fill="currentColor" stroke="none"';
const B = '#1976d2';
const ICONS = {
  x: S('12 12', '<path d="M1 1l10 10M11 1L1 11"/>'),
  plus: S('18 18', '<path d="M9 0v18M0 9h18" stroke-width="2.6"/>'),
  plusth: S('8 8', '<path d="M4 0v8M0 4h8"/>'),
  minus: S('8 8', '<path d="M0 4h8"/>'),
  min: S('12 12', '<path d="M0 6h12"/>'),
  restore: S('12 12', '<path d="M.5 3h8.500v8.500h-8.500zM3 3V.5h8.500V9H9"/>'),
  chev: S('8 5', '<path d="M.5 .5L4 4.200 7.500 .5"/>'),
  caretw: S('8 5', '<path d="M.5 4.500L4 .8 7.500 4.500"/>'),
  caretup: S('8 5', '<path d="M.5 4.500L4 .8 7.500 4.500" stroke-width="2"/>'),
  caretdn: S('8 5', '<path d="M.5 .5L4 4.200 7.500 .5" stroke-width="2"/>'),
  chevl: S('5 10', '<path d="M4.500 .5L.8 5l3.700 4.500"/>'),
  chevr: S('5 10', '<path d="M.5 .5L4.200 5 .5 9.500"/>'),
  up: S('10 6', `<path d="M0 6L5 0l5 6z" ${fillc}/>`),
  down: S('10 6', `<path d="M0 0l5 6 5-6z" ${fillc}/>`),
  left: S('5 8', `<path d="M5 0L0 4l5 4z" ${fillc}/>`),
  right: S('5 8', `<path d="M0 0l5 4-5 4z" ${fillc}/>`),
  back: S('20 20', '<path d="M10 1L1 10l9 9M1 10h18" stroke-width="2"/>'),
  fwd: S('20 20', '<path d="M10 1l9 9-9 9M19 10H1" stroke-width="2"/>'),
  reload: S('24 24', `<path d="M19.500 16a9 9 0 1 1-1-10" stroke-width="2.700"/><path d="M21 1v9h-9z" ${fillc}/>`),
  lock: S('14 18', `<rect x="0" y="7" width="14" height="11" rx="1.500" fill="#aab9bd" stroke="none"/><path d="M3.500 8V4.500a3.500 3.500 0 0 1 7 0V8" stroke="#aab9bd" stroke-width="2"/>`),
  share: S('24 22', '<path d="M8 5H1v16h18v-6M15 1l8 7-8 7v-4c-5 0-8 1-10 5 1-7 4-10 10-11z" stroke-width="1.600"/>'),
  star: S('24 23', '<path d="M12 2l3 7 7.500.6-5.700 5 1.800 7.400-6.600-4-6.600 4 1.800-7.400-5.700-5L9 9z" stroke-width="2.200"/>'),
  puzzle: S('24 24', `<path d="M9 4a3 3 0 0 1 6 0v1h6v6h-1l1 .3a3 3 0 0 1 0 5.700v6h-6v-1a3 3 0 0 0-6 0v1H1v-6h1a3 3 0 0 0 0-6H1V5h8z" ${fillc}/>`),
  dots: S('4 16', `<circle cx="2" cy="2" r="1.900" ${fillc}/><circle cx="2" cy="8" r="1.900" ${fillc}/><circle cx="2" cy="14" r="1.900" ${fillc}/>`),
  uitab: S('24 24', '<rect x="1.500" y="1.500" width="21" height="21" stroke="#0a6be8" stroke-width="3"/><text x="4.500" y="17.500" font-size="14" font-family="Open Sans" font-weight="bold" fill="#0a6be8" stroke="none">Ui</text>'),
  oracle: S('23 24', '<rect width="23" height="24" rx="2" fill="#f00" stroke="none"/><rect x="4.500" y="6" width="14" height="11" rx="5.500" stroke="#fff" stroke-width="3"/>'),
  findc: S('38 38', '<circle cx="19" cy="19" r="19" fill="#0bdaa2" stroke="none"/><circle cx="18.500" cy="20" r="8" stroke="#fff" stroke-width="3.500"/><path d="M24 26l7 7" stroke="#fff" stroke-width="4"/>'),
  mag: S('16 16', '<circle cx="10.500" cy="5.500" r="4.500"/><path d="M7 9l-6 6"/>'),
  magl: S('16 16', '<circle cx="10.500" cy="5.500" r="4.800"/><path d="M7 9l-6.500 6.500"/>'),
  maglb: S('30 32', '<circle cx="18" cy="12" r="10.500" stroke="#c8c6c4"/><path d="M11 20L1 31" stroke="#c8c6c4"/>'),
  magr: S('14 14', '<circle cx="9" cy="5" r="4" stroke-width="2"/><path d="M6 8l-5 5" stroke-width="2.500"/><circle cx="9" cy="5" r="1.500" fill="currentColor"/>'),
  feedback: S('18 17', '<path d="M6 5V1h11v8h-3l-2 2V9"/><circle cx="7" cy="8" r="2.800"/><path d="M1 17c0-4 2-6 6-6s6 2 6 6"/>'),
  help: S('17 17', `<circle cx="8.500" cy="8.500" r="7.800"/><text x="5.500" y="12.500" font-size="11" font-family="Open Sans" font-weight="bold" ${fillc}>?</text>`),
  pin: S('9 12', '<path d="M2.500 .6h4v6.400M2.500 .6V7M5.800 .6V7M.5 7h8M4.500 7v5"/>'),
  plusbox: S('18 18', '<path d="M5 4V1h12v12h-3M1 5h12v12H1zM7 7.500v7M3.500 11h7" stroke-width="1.600"/>'),
  minusbox: S('18 18', '<path d="M5 4V1h12v12h-3M1 5h12v12H1zM3.500 11h7" stroke-width="1.600"/>'),
  sync: S('18 18', `<path d="M3 11a6.500 6.500 0 0 1 2-7c3-2 7-2 9 1M15 7a6.500 6.500 0 0 1-2 7c-3 2-7 2-9-1" stroke-width="2.400"/><path d="M0 9l3 4 4-4zM11 9l4-4 3 4z" ${fillc}/>`),
  files: S('18 20', '<path d="M1 1h7l3 3v10H1zM8 1v4h3M13 4l2 2v11H5M16 7v12H9" stroke-width="1.500"/>'),
  folderf: S('18 16', `<path d="M0 1h7l1 2h9v2H0zM0 6h18l-1 10H1z" ${fillc}/>`),
  folder: S('16 14', '<path d="M1 13V1h5l1 2h8v10z" stroke-width="1.400"/><path d="M1 2h5" stroke-width="2.500"/>'),
  tmpl: S('16 14', '<path d="M1 10.500V1h4l1 1.500h7v8zM3 12.500h12V5" stroke-width="1.400"/>'),
  gear: S('18 18', `<circle cx="9" cy="9" r="5" stroke-width="3"/><circle cx="9" cy="9" r="7.500" stroke-width="2.800" stroke-dasharray="2.950 2.950"/>`),
  bag: S('16 17', `<path d="M5 6V3a3 3 0 0 1 6 0v3M1 7l2-2h10l2 2v9H1z" stroke="#57503f" stroke-width="1.500"/><path d="M1 7h14M3 13h10M5 8l6 4M5 12l6-4" stroke="${B}" stroke-width="1.700"/>`),
  hand: S('15 16', `<path d="M4 16L0 8l2-.500 2 3V2.500h1.800V8h.8V.5h2V8h.8V1.500h1.800V9l1-.5V4h1.800l-.500 7-2 5z" ${fillc}/>`),
  fit: S('15 15', '<path d="M1 4V1h3M11 1h3v3M14 11v3h-3M4 14H1v-3M2 2l4 4M13 2L9 6M2 13l4-4M13 13L9 9M6 5v5M9 5v5" stroke-width="2"/>'),
  over: S('15 16', '<rect x="1" y="1" width="13" height="14" stroke-width="1.800"/><path d="M4 4l2 2M11 4L9 6M4 12l2-2M11 12l-2-2M3 8h3M9 8h3" stroke-width="1.500"/>'),
  mbox: S('9 9', '<path d="M.5 .5h8v8h-8zM2.500 4.500h4"/>'),
  obj: S('16 16', '<path d="M1 1h13v13H1z"/><path d="M1 2.500h13" stroke-width="3"/><path d="M3 7h6M3 10h5" /><path d="M9 9l4-2 3 2v5l-4 2-3-2z" fill="#e8b05a" stroke="none"/><path d="M12 10l4-1v5l-4 2z" fill="#3f8ad9" stroke="none"/>'),
  wrench: S('16 17', `<path d="M1 14l7-7a4 4 0 0 1 5-6l-2 3 1.500 2 3-1a4 4 0 0 1-6 4l-6 7.500q-2.500 0-2.500-2.500z" ${fillc}/>`),
  outline: S('16 15', '<path d="M2 1h7M2 1v12M2 7h4M7 5h8M7 8.500h8M2 13h4M7 13h8" stroke="#57503f" stroke-width="2"/>'),
  flaskq: S('16 17', `<path d="M5 1h5M6 1v6L1 15h6M9 1v4"/><circle cx="11" cy="11" r="3.500" stroke="${B}" stroke-width="1.600"/><path d="M13 14l3 3" stroke="${B}" stroke-width="1.600"/>`),
  res: S('14 16', `<path d="M2 5V1h11v14" stroke-width="1.300"/><path d="M1 8h4v3H1zM1 12.500h4v3H1zM7 12.500h3v3H7z" stroke="${B}"/><circle cx="8.500" cy="9.500" r="2" fill="${B}" stroke="none"/>`),
  robot: S('11 13', `<rect width="11" height="13" rx="1" fill="#fff" stroke="none"/><rect x="3" y="3.500" width="5" height="6" stroke="${B}" stroke-width="1.700"/>`),
  upload: S('12 12', `<path d="M1 7v4.400h10V7" stroke-width="1.300"/><path d="M5 9V4H3l3-4 3 4H7v5z" ${fillc}/>`),
  pencil: S('12 12', `<path d="M0 12l1-4 7-7 3 3-7 7z" ${fillc}/>`),
  git: S('12 12', `<path d="M6 0l6 6-6 6-6-6z" ${fillc}/><path d="M5 3v6M5 5l3 2" stroke="${B}"/>`),
  branch: S('11 12', '<circle cx="2.500" cy="2.500" r="1.600"/><circle cx="8.500" cy="3" r="1.600"/><path d="M2.500 4v8M8.500 5c0 3-6 1-6 4" stroke-width="1.600"/>'),
  newf: S('24 26', `<path d="M13 23.500H2v-22h12l6 6V15M14 1.500v6h6" stroke="#77787b" stroke-width="1.700"/><path d="M20 17v8M16 21h8" stroke="${B}" stroke-width="2"/>`),
  savef: S('24 26', `<path d="M1.500 2h18l3 3v19h-21z" stroke="#77787b" stroke-width="2"/><path d="M5 2v10h14V2M6 24v-7h11v7M9 18v6" stroke="#77787b" stroke-width="2"/><path d="M8 5.500h9M8 9h9" stroke="${B}" stroke-width="1.600"/>`),
  expt: S('22 26', `<path d="M9 24H2V2h10l5 6v6M12 2v6h5" stroke="#77787b" stroke-width="1.700"/><path d="M8 25c1-5 4-6 8-6v-3.500l6 5-6 5v-3.500c-4 0-6 1-8 3z" fill="${B}" stroke="none"/>`),
  play: S('18 24', `<path d="M0 0l18 12L0 24z" fill="${B}" stroke="none"/>`),
  cut: S('14 18', '<path d="M3 1l7 12M11 1L4 13"/><circle cx="3" cy="15" r="2"/><circle cx="11" cy="15" r="2"/>'),
  copy: S('16 18', '<path d="M5 13H1V1h7v3M6 5h6l3 3v9H6zM11 5v4h4" stroke-width="1.300"/>'),
  pasteg: S('16 18', '<path d="M7 15H1V3h3M11 3h3v4M4 1.500h7v4H4zM8 8h7v9H8z" stroke-width="1.300"/>'),
  undo: S('16 16', '<path d="M1 1v6h6M1.500 6.500C6 1 15 3 15 9c0 3-3 5-6 6.500" stroke-width="1.500"/>'),
  redo: S('16 16', '<path d="M15 1v6H9M14.500 6.500C10 1 1 3 1 9c0 3 3 5 6 6.500" stroke-width="1.500"/>'),
  pkg: S('26 26', `<path d="M13 1l6 6h-4v6h-4V7H7z" fill="${B}" stroke="none"/><path d="M2 11l6-3 3 5-5 3zM24 11l-6-3-3 5 5 3z" fill="#5d5f62" stroke="none"/><path d="M4 16v6l9 3M13 14v10" stroke="#5d5f62" stroke-width="1.600"/><circle cx="19" cy="20" r="5.500" fill="${B}" stroke="#fff"/><path d="M19 17v6" stroke="#fff"/>`),
  db: S('26 26', `<ellipse cx="19" cy="4" rx="6" ry="3" fill="#a0a0a0" stroke="#a0a0a0"/><g stroke="#a0a0a0" stroke-width="1.600"><ellipse cx="9" cy="9" rx="7.500" ry="3.500"/><path d="M1.500 9v12c0 5 15 5 15 0V9M1.500 13c0 4.500 15 4.500 15 0M1.500 17c0 4.500 15 4.500 15 0M18 11c4 0 7-1 7-2.500M18 15c4 0 7-1 7-2.500M18 19c4 0 7-1 7-2.500M19 23l2 2 4-5"/></g>`),
  rec: S('26 26', `<circle cx="13" cy="13" r="12" stroke="#77787b" stroke-width="1.800"/><circle cx="13" cy="13" r="5" fill="${B}" stroke="none"/>`),
  scr: S('26 22', `<path d="M1 1h24v15H1zM13 16v4M7 20.500h12" stroke="#77787b" stroke-width="2"/><rect x="4" y="4" width="18" height="9" stroke="${B}" stroke-dasharray="2 1"/>`),
  datas: S('26 26', `<rect x="1.500" y="1.500" width="23" height="23" stroke="#77787b" stroke-width="2" stroke-dasharray="2 1.500"/><path d="M5 8h16v10H5zM5 11.500h16M5 15h16M10 8v10M15.500 8v10" stroke="${B}" stroke-width="1.300"/>`),
  uev: S('26 26', `<rect x="1.500" y="1.500" width="23" height="23" stroke="#77787b" stroke-width="2"/><path d="M4 5h9M4 8h9M4 11h9" stroke="${B}" stroke-width="1.800" stroke-dasharray="1.700 1"/><rect x="15" y="12" width="7.500" height="10" rx="3.500" fill="${B}" stroke="none"/>`),
  uiex: S('24 26', `<path d="M12 0l12 6v14l-12 6-12-6V6z" fill="${B}" stroke="none"/><path d="M6 10h12M6 17h12M12 10v7M7 10v-1" stroke="#fff" stroke-width="1.500"/><g fill="#fff" stroke="none"><circle cx="6" cy="10" r="2"/><circle cx="18" cy="10" r="2"/><circle cx="12" cy="10" r="2"/><circle cx="12" cy="17" r="2"/><circle cx="18" cy="17" r="2"/></g>`),
  rem: S('26 26', `<circle cx="13" cy="13" r="12" stroke="#77787b" stroke-width="1.500"/><path d="M8 8l10 10M18 8L8 18" stroke="${B}" stroke-width="4"/>`),
  ana: S('26 26', '<g stroke="#77787b" stroke-width="1.600"><path d="M3 1H1v5c0 5 8 5 8 0V1H7M5 10v7c0 5 3 7 8 7"/><circle cx="22" cy="4" r="3"/><path d="M22 7v6M17 16h5l3 3v6h-8z"/></g>'),
  test: S('22 26', `<path d="M7 1h8M8.500 1v9L1 23.500h20L13.500 10V1" stroke="#77787b" stroke-width="1.500"/><path d="M6 17h10l4 6H2z" fill="${B}" stroke="none"/>`),
  xls: S('24 26', `<path d="M0 3l15-3v26L0 23z" fill="${B}" stroke="none"/><path d="M4 8l7 10M11 8L4 18" stroke="#fff" stroke-width="2"/><path d="M18 2v22M22 2v22" stroke="#77787b" stroke-width="3.500"/>`),
  pub: S('24 26', `<path d="M1 18v7h22v-7" stroke="#77787b" stroke-width="2"/><path d="M9 21V9H4l8-9 8 9h-5v12z" fill="${B}" stroke="none"/>`),
  hex: S('15 16', `<path d="M7.500 0L15 4v8l-7.500 4L0 12V4z" fill="${B}" stroke="none"/><path d="M5 13V4h3a2 2 0 0 1 0 5H6" stroke="#fff" stroke-width="1.500"/>`),
  pen: S('8 9', '<path d="M0 9L8 0" stroke="#e9a13b" stroke-width="2.200"/>'),
  deps: S('15 15', `<path d="M1 0v13h6M1 4h6" stroke="#77787b" stroke-width="1.500"/><path d="M7 1h7v6H7zM7 9h7v6H7z" fill="#5d5f62" stroke="none"/>`),
  dep: S('16 15', `<path d="M1 0v15M1 7.500h5" stroke="#77787b" stroke-width="1.400"/><rect x="6" y="3" width="10" height="9" rx="1" fill="${B}" stroke="none"/>`),
  ent: S('16 16', `<ellipse cx="11" cy="2.500" rx="4.500" ry="2" fill="#77787b" stroke="none"/><g stroke="${B}"><ellipse cx="5.500" cy="5" rx="5" ry="2"/><path d="M.5 5v8c0 3 10 3 10 0V5M.5 8c0 3 10 3 10 0M.5 10.500c0 3 10 3 10 0"/></g><path d="M12 6h4M12 9h4M12 12h3" stroke="#77787b"/>`),
  br: S('8 8', '<path d="M1 0v8M1 4h4" stroke="#57503f" stroke-width="1.300"/><circle cx="6" cy="4" r="1.700" fill="#57503f" stroke="none"/>'),
  uif: S('15 16', `<path d="M0 0h12l3 3v13H0z" fill="${B}" stroke="none"/><text x="2.500" y="12" font-size="11" font-family="Open Sans" fill="#fff" stroke="none">Ui</text>`),
  uifm: S('15 16', `<path d="M0 0h12l3 3v13H0z" fill="${B}" stroke="none"/><text x="3" y="12" font-size="11" font-family="Open Sans" fill="#fff" stroke="none">Ui</text><path d="M0 10l6 3.500-6 3z" fill="#4fb37b" stroke="#fff" stroke-width=".6"/>`),
  json: S('15 15', '<path d="M4 1l9-1 1 12-10 3-4-2z" fill="#7fb7c4" stroke="none"/><path d="M13 0l2 3v9l-3 2z" fill="#5c6b6f" stroke="none"/>'),
  flow: S('17 17', `<path d="M4 8V3h5M4 9v5h5" stroke="#77787b" stroke-width="1.500" stroke-dasharray="3 1"/><path d="M1 6.500h4v4H1zM11 1h4v4h-4zM11 12h4v4h-4z" stroke="${B}" stroke-width="1.500"/>`),
  state: S('17 16', '<path d="M1 6V1h15v14H8" stroke="#77787b" stroke-width="1.300"/><path d="M.5 2h16" stroke="#77787b" stroke-width="4"/><circle cx="3" cy="9" r="1.700" stroke="#77787b"/><path d="M3 11v5M1 14l2 2 2-2" stroke="#77787b"/>'),
  stend: S('17 16', '<path d="M1 6V1h15v14H10" stroke="#77787b" stroke-width="1.300"/><path d="M.5 2h16" stroke="#77787b" stroke-width="4"/><circle cx="4.500" cy="12" r="3" stroke="#77787b" stroke-width="2"/>'),
  enter: S('18 16', '<path d="M6 2.500a6.800 6.800 0 1 1 0 11" stroke-width="1.500"/><path d="M0 8h7M4 4.500L8 8l-4 3.500z" fill="currentColor" stroke-width="2"/>'),
  grips: S('10 10', `<path d="M8 0h2v2H8zM8 4h2v2H8zM8 8h2v2H8zM4 4h2v2H4zM4 8h2v2H4zM0 8h2v2H0z" ${fillc}/>`),
  startc: S('40 40', `<circle cx="20" cy="20" r="18.500" stroke="#6f7174" stroke-width="2.400"/><path d="M15 9.500L31 20 15 30.500z" fill="${B}" stroke="none"/>`),
  dblup: S('10 10', '<path d="M1 5l4-4 4 4M1 9.500l4-4 4 4" stroke-width="1.400"/>'),
  savex: S('18 18', '<path d="M5 17H1V1h13l3 3v4M5 1v5h8V1M5 17v-6h4M10 12a4 4 0 0 1 7 0M17 14a4 4 0 0 1-7 1M17 9v3h-3"/>'),
  touch: S('13 17', '<path d="M4 11V5a1.300 1.300 0 0 1 2.600 0v5l5 1-.6 5.500H5L1 12zM2 7a4 4 0 1 1 6.500 0"/>'),
  qat: S('8 7', `<path d="M0 .6h8"/><path d="M1 3.500h6L4 6.500z" ${fillc}/>`),
  ribup: S('13 11', '<path d="M.5 .5h12v10H.5zM.5 2.500h12M6.500 9V4.500M4.500 6.500l2-2 2 2"/>'),
  comment: S('12 12', '<path d="M1 1h10v7H5l-2.500 3V8H1z"/>'),
  paste: S('28 32', '<path d="M12 26H2V5h18v5" stroke="#e8b05a" stroke-width="2"/><path d="M7 7V3h8v4z" fill="#4b4a49" stroke="#c8c6c4"/><path d="M14 11h13v18H14z" fill="#3b3a39" stroke="#c8c6c4" stroke-width="1.400"/>'),
  copyx: S('16 17', '<path d="M5 13H1V1h7v2M5 3h6l4 4v9H5zM11 3v4h4"/>'),
  brush: S('17 16', '<path d="M9 5l4-4 3 3-4 4z" stroke="#c8c6c4"/><path d="M1 8l6-3 5 5-3 6z" fill="#e8b05a" stroke="none"/><path d="M7 4l6 6" stroke="#fff"/>'),
  launch: S('8 8', '<path d="M1 7V1h6M3 3l4.500 4.500M7.500 4v3.500H4"/>'),
  border: S('15 16', '<rect x=".8" y=".8" width="13.400" height="14.400" stroke="#fff" stroke-width="1.600"/><path d="M7.500 2v12M2 8h11" stroke="#fff" stroke-dasharray="1.500 1.500"/>'),
  fill: S('17 21', '<path d="M4 9l5-6 5 5-5 5z" stroke="#c8c6c4"/><path d="M13 8c2 2 2 4 1 5" stroke="#3a96dd" stroke-width="2"/><path d="M0 18.500h17" stroke="#ff0" stroke-width="4"/>'),
  fontc: S('17 21', '<path d="M4 13L8.500 1.500 13 13M5.500 9.500h6" stroke="#c8c6c4" stroke-width="1.300"/><path d="M0 18.500h17" stroke="#ed7d31" stroke-width="4"/>'),
  altop: S('15 16', '<path d="M0 1h15M2.500 5.500h10M0 10h15"/>'),
  almid: S('15 16', '<path d="M0 4h15M2.500 8.500h10M0 13h15"/>'),
  albot: S('15 16', '<path d="M0 6h15M2.500 10.500h10M0 15h15"/>'),
  alleft: S('15 16', '<path d="M0 2h15M0 6h9M0 10h15M0 14h9"/>'),
  alcen: S('15 16', '<path d="M0 2h15M3 6h9M0 10h15M3 14h9"/>'),
  alright: S('15 16', '<path d="M0 2h15M6 6h9M0 10h15M6 14h9"/>'),
  orient: S('18 17', `<text x="0" y="11" font-size="11" font-family="Open Sans" transform="rotate(-35 4 9)" ${fillc}>ab</text><path d="M6 16L17 5M12 5h5v5" stroke="#3a96dd"/>`),
  wrap: S('15 17', `<text x="0" y="8" font-size="10" font-family="Open Sans" ${fillc}>ab</text><text x="0" y="16" font-size="10" font-family="Open Sans" ${fillc}>c</text><path d="M14 7v6H7M10 10l-3 3 3 3" stroke="#3a96dd"/>`),
  outd: S('15 14', '<path d="M0 1h15M8 5h7M8 9h7M0 13h15"/><path d="M6 7H0M3 4L0 7l3 3" stroke="#3a96dd" stroke-width="1.500"/>'),
  ind: S('15 14', '<path d="M0 1h15M8 5h7M8 9h7M0 13h15"/><path d="M0 7h6M3 4l3 3-3 3" stroke="#3a96dd" stroke-width="1.500"/>'),
  merge: S('16 15', '<path d="M.5 .5h15v14H.5zM8 .5V4M8 11v3.500"/><path d="M1 4h14v7H1z" stroke="#3a96dd"/><path d="M3 7.500h10M5 5.500l-2 2 2 2M11 5.500l2 2-2 2" stroke="#3a96dd"/>'),
  decup: S('16 18', `<text x="9" y="8" font-size="9" font-family="Open Sans" ${fillc}>0</text><text x="0" y="17" font-size="9" font-family="Open Sans" ${fillc}>.00</text><path d="M8 4H1M4 1L1 4l3 3" stroke="#3a96dd"/>`),
  decdn: S('16 18', `<text x="2" y="8" font-size="9" font-family="Open Sans" ${fillc}>.00</text><text x="9" y="17" font-size="9" font-family="Open Sans" ${fillc}>.0</text><path d="M0 13h7M4 10l3 3-3 3" stroke="#3a96dd"/>`),
  cond: S('28 32', '<path d="M0 4h28v23H0z" fill="#4b4a49"/><path d="M6 4h12v7H6zM6 19h14v8H6z" fill="#e3170a"/><path d="M6 11h9v8H6z" fill="#1274c4"/><path d="M6 4v23M22 4v23M0 11h28M0 19h28" stroke="#e0e0e0"/>'),
  ftable: S('30 32', '<path d="M1 4h27v23H1zM10 4v23M19 4v23M1 9h27M1 18h27" stroke="#d0d0d0"/><path d="M10 9h9v9h-9zM19 9h9v9h-9z" fill="#1274c4"/><path d="M28 10L16 26" stroke="#e0e0e0" stroke-width="3"/><path d="M17 22l4 4-8 4z" fill="#3a96dd" stroke="none"/>'),
  insc: S('32 32', '<path d="M3 6h26v22H3zM12 6v22M21 6v22M3 12h26M3 21h26" stroke="#d0d0d0"/><path d="M8 13h23v7H8z" fill="#1274c4" stroke="#3a96dd"/><path d="M13 16.500H1M6 11l-5 5.500 5 5.500" stroke="#3a96dd" stroke-width="1.600"/>'),
  delc: S('30 32', '<path d="M1 6h28v22H1zM10 6v22M20 6v22M1 12h28M1 21h28" stroke="#d0d0d0"/><path d="M5 13h14v7H5z" fill="#1274c4"/><path d="M18 11l12 13M30 11L18 24" stroke="#e0443a" stroke-width="2"/>'),
  fmtc: S('30 34', '<path d="M1 8h28v22H1zM8 8v22M22 8v22M1 14h28M1 23h28" stroke="#d0d0d0"/><path d="M8 14h14v9H8z" fill="#1274c4"/><path d="M7 3h16M7 1v4M23 1v4" stroke="#3a96dd"/>'),
  sigma: S('14 15', '<path d="M13 3V1H1l6 6.500L1 14h12v-2"/>'),
  filld: S('15 14', '<path d="M.6 .6h14v12.800H.6zM.6 3h14"/><path d="M7.500 5v6M5 8.500l2.500 2.500L10 8.500" stroke="#3a96dd"/>'),
  eraser: S('15 14', '<path d="M1 9l7-8 6 5-7 7.500z" stroke="#c68bd6"/><path d="M1 9l3-3.500 6 5L7 13.500z" fill="#b146c2" stroke="none"/>'),
  sort: S('30 30', `<text x="0" y="12" font-size="14" font-family="Open Sans" fill="#3a96dd" stroke="none">A</text><text x="1" y="28" font-size="14" font-family="Open Sans" ${fillc}>Z</text><path d="M13 8h16l-6 8v10h-4V16z" stroke="#c8c6c4"/>`),
  analyze: S('33 33', '<path d="M1 1h31v31H1zM1 7h31M1 26h31M1 13h31M1 20h31" stroke="#a0a0a0" stroke-width="2"/><circle cx="16" cy="13" r="10" fill="#343332" stroke="#d0d0d0" stroke-width="1.500"/><path d="M23 21l8 9" stroke="#d0d0d0" stroke-width="2.500"/><path d="M11 10v8M15.500 6v12" stroke="#3a96dd" stroke-width="3.500"/><path d="M20 9v9" stroke="#d0d0d0" stroke-width="3"/>'),
  check: S('13 10', '<path d="M1 5l4 4 7-8" stroke-width="1.800"/>'),
  addc: S('16 16', '<circle cx="8" cy="8" r="7"/><path d="M8 4v8M4 8h8" stroke-width="1.500"/>'),
  macro: S('15 13', '<path d="M14 5V1H1v11h6M1 3.500h13M3 6h4M3 9h3"/><circle cx="11" cy="9" r="3"/><circle cx="11" cy="9" r="1" fill="currentColor"/>'),
  disp: S('14 13', '<path d="M3 1h10v8H8M3 5v3H0"/><path d="M10 6l-4 6" stroke-width="2.500"/>'),
  grid: S('12 12', '<path d="M.5 .5h11v11H.5zM4 0v12M8 0v12M0 4h12M0 8h12"/>'),
  pagel: S('12 12', '<path d="M.5 .5h11v11H.5zM3 3h6v6.500H3zM4 5h4M4 7h4"/>'),
  pageb: S('12 12', '<path d="M.5 .5h11v11H.5zM3 .5v6h5.500v-6"/>'),
  slider: S('102 12', `<path d="M0 6h102M51 3v6"/><rect x="33" y="0" width="5" height="12" ${fillc}/>`),
  /* taskbar */
  win: S('16 16', '<path d="M0 2.300L6.500 1.400v6.100H0zM7.300 1.300L16 0v7.500H7.300zM0 8.400h6.500v6.200L0 13.700zM7.300 8.400H16V16l-8.700-1.200z" fill="#fff" stroke="none"/>'),
  srch: S('16 16', '<circle cx="10.500" cy="5.500" r="5"/><path d="M7 9.500L.5 16"/>'),
  tview: S('16 16', '<path d="M1 0v2.500h9V0M1 16v-2.500h9V16M.6 4.600h10v6.800H.6zM14.500 0v4M14.500 8v8"/><rect x="13.500" y="5" width="2" height="2" fill="#fff" stroke="none"/>'),
  expl: S('24 24', '<path d="M1 4a1 1 0 0 1 1-1h8l2 2.500h10.500v15H1z" fill="#f2b21b" stroke="none"/><path d="M1 7h22v14H1z" fill="#ffd767" stroke="none"/><path d="M5 22v-6a1 1 0 0 1 1-1h12a1 1 0 0 1 1 1v6h-4v-3H9v3z" fill="#3a96dd" stroke="none"/>'),
  outl: S('24 24', '<rect x="7" y="1" width="16" height="20" rx="1" fill="#1f8fe0" stroke="none"/><path d="M12 3h6v7h-6z" fill="#28a8ea" stroke="none"/><path d="M18 3h5v7h-5z" fill="#50d9ff" stroke="none"/><path d="M7 12l8 5 8-5v11H7z" fill="#1490df" stroke="none"/><rect x="0" y="6" width="12" height="13" rx="1" fill="#0364b8" stroke="none"/><ellipse cx="6" cy="12.500" rx="2.500" ry="3" stroke="#fff" stroke-width="1.700"/>'),
  chr: S('24 24', '<g stroke="none"><circle cx="12" cy="12" r="11" fill="#fbc116"/><path d="M12 12L2.500 6.500A11 11 0 0 0 11 23l5-8.500z" fill="#1e8e3e"/><path d="M2.500 6.500A11 11 0 0 1 21.500 6.500H12v5.500l-4.800 2.500z" fill="#e33b2e"/><circle cx="12" cy="12" r="5.200" fill="#fff"/><circle cx="12" cy="12" r="4.200" fill="#4285f4"/></g>'),
  ecl: S('24 24', '<circle cx="12" cy="12" r="11" fill="#b9b3c8" stroke="#d8d0c0" stroke-width="1"/><path d="M17 19a9 9 0 1 1 1-13M16 17a6.500 6.500 0 1 1 0-9.500M15 15a4 4 0 1 1 0-6" stroke="#211a63" stroke-width="1.500"/><circle cx="14.500" cy="12" r="3" fill="#1a1457" stroke="none"/>'),
  edge: S('24 24', '<g stroke="none"><path d="M1 13C0 5 6 0 12 0c7 0 12 5 12 10 0 5-5 6-8 5-2-1-1-2-1-3 0-3-3-5-6-4-4 1-6 4-8 5z" fill="#35c1b1"/><path d="M13 0c7 0 11 5 11 10 0 5-5 6-8 5-2-1-1-2-1-3 0-5-3-9-8-10z" fill="#4fd873"/><path d="M1 13C2 9 6 7 9 8c-3 3-3 10 2 14-6-1-10-4-10-9z" fill="#0f7bd8"/><path d="M8 9c-3 5 0 12 8 12 2 0 5-1 6-3-2 4-6 6-10 6C5 24 2 14 8 9z" fill="#1553a8"/></g>'),
  sticky: S('24 24', '<path d="M1 2h22v13l-6 8H1z" fill="#ffd500" stroke="none"/><path d="M12 23V13h11z" fill="#444" stroke="none"/><path d="M14 23l9-10v9a1 1 0 0 1-1 1z" fill="#f2b800" stroke="none"/>'),
  excel: S('24 24', '<rect x="7" y="1" width="16" height="21" fill="#21a366" stroke="none"/><path d="M15 1h8v7h-8z" fill="#33c481" stroke="none"/><path d="M7 15h16v7H7z" fill="#185c37" stroke="none"/><rect x="0" y="6" width="12" height="13" rx="1" fill="#107c41" stroke="none"/><path d="M4 9.500l4 6M8 9.500l-4 6" stroke="#fff" stroke-width="1.500"/>'),
  snag: S('24 24', '<rect width="24" height="24" fill="#0a78e6" stroke="none"/><path d="M16 0h8v24h-6z" fill="#16a3f2" stroke="none"/><path d="M14 4c-5 0-8 1-7 4 1 2 3 3 4 5s1 5-3 6M15 9c3 2 4 5 2 7-1 2-3 3-5 4" stroke="#fff" stroke-width="2.700"/><circle cx="16" cy="5" r="1.600" fill="#fff" stroke="none"/>'),
  cam: S('24 24', '<rect width="24" height="24" fill="#23b34b" stroke="none"/><rect x="3.500" y="3.500" width="17" height="17" stroke="#fff" stroke-width="2"/><path d="M8.500 8l8 4-8 4z" fill="#fff" stroke="none"/>'),
  shield: S('16 16', '<path d="M7 0l6 2v6c0 4-3 7-6 8-3-1-6-4-6-8V2z" fill="#4fb3c4" stroke="none"/><circle cx="9" cy="9" r="3" stroke="#dfe8ee"/><path d="M11 11l4 5" stroke="#dfe8ee"/>'),
  bat: S('16 14', '<path d="M4 4h10v8H6V8M14 6h2v4h-2M2 0v3M5 0v3M1 3h5v3H1z"/><rect x="8" y="6" width="4" height="4" fill="#fff" stroke="none"/>'),
  net: S('16 14', '<path d="M3 1h12v8H3M1 1h4v4H1zM9 9v4M5 13h8"/>'),
  vol: S('16 14', '<path d="M1 5h2l3-4v12L3 9H1zM9 5l5 5M14 5l-5 5"/>'),
  noti: S('16 16', '<path d="M0 0h16v12H8l-3 4v-4H0z" fill="#fff" stroke="none"/><path d="M3 3h10M3 6h10M3 9h7" stroke="#1b2742"/>'),
};
const ic = (n, w, h, m = 0, c = '') => `<i class="${c}" data-i="${n}" data-w="${w}" data-h="${h}" data-m="${m}"></i>`;
const ft = (t, w, m = 0) => `<span class="f" data-w="${w}" data-m="${m}">${t}</span>`;
const $ = id => document.getElementById(id);

/* taskbars */
const APPS = [['expl', 'run'], ['outl', 'run'], ['chr', 'hot run'], ['ecl', ''], ['edge', ''], ['sticky', 'run two'], ['excel', 'run'], ['snag', 'run two'], ['cam', 'run']];
document.querySelectorAll('.taskbar').forEach(t => {
  const clock = `<div class="clock">${ft('3:49 PM', 43)}<br>${ft('3/8/2022', 47)}</div>`;
  const tray = t.dataset.tray === 'full'
    ? ft('Rain/snow', 64) + ic('caretw', 12, 6, 18) + ic('shield', 16, 17, 10) + ic('bat', 16, 14, 8) + ic('net', 16, 14, 8) + ic('vol', 15, 14, 8) + clock + `<span class="notif">${ic('noti', 16, 16)}<span class="badge">2</span></span><span class="peek"></span>`
    : clock;
  t.innerHTML = `<div class="tb">${ic('win', 16, 16)}</div><div class="tb">${ic('srch', 16, 16)}</div><div class="tb">${ic('tview', 16, 16)}</div>` +
    APPS.map(([n, c], k) => `<div class="tb app ${c} ${k ? '' : 'first'}">${ic(n, 24, 24)}</div>`).join('') + `<div class="tray">${tray}</div>`;
});

/* studio ribbon: gap, width, icon, icon size, two text lines with widths, chevron, muted */
const ub = (m, w, n, iw, ih, a, aw, b, bw, cv, off) => `<div class="ub ${off ? 'off' : ''}" data-w="${w}" data-m="${m}"><div class="icb">${ic(n, iw, ih)}</div><div class="ln">${ft(a, aw)}</div><div class="ln">${b ? ft(b, bw) : ''}${cv ? ic('chev', 6, 4, b ? 3 : 0) : ''}</div></div>`;
const ug = (...x) => `<div class="ugrp">${x.join('')}</div>`;
const cl = (n, t, w, iw = 15) => `<div>${ic(n, iw, 16)}${ft(t, w, 20 - iw)}</div>`;
$('uiribbon').innerHTML =
  ug(ub(3, 32, 'newf', 23, 25, 'New', 23, '', 0, 1), ub(0, 34, 'savef', 24, 25, 'Save', 25, '', 0, 1), ub(0, 58, 'expt', 22, 25, 'Export as', 48, 'Template', 47), ub(0, 44, 'play', 18, 24, 'Debug', 35, 'File', 17, 1), '<div data-w="6"></div>') +
  `<div class="ugrp"><div class="clip" data-m="12">${cl('cut', 'Cut', 18, 11)}${cl('undo', 'Undo', 28, 16)}${cl('copy', 'Copy', 28)}${cl('redo', 'Redo', 26, 16)}${cl('pasteg', 'Paste', 27)}</div><div data-w="3"></div></div>` +
  ug(ub(0, 72, 'pkg', 26, 26, 'Manage', 43, 'Packages', 48)) + ug(ub(0, 68, 'db', 25, 26, 'Manage', 42, 'Entities', 37, 0, 1)) +
  ug(ub(10, 58, 'rec', 25, 26, 'Recording', 53, '', 0, 1), ub(2, 58, 'scr', 24, 20, 'Screen', 35, 'Scraping', 46), ub(0, 54, 'datas', 25, 26, 'Data', 25, 'Scraping', 46), ub(0, 54, 'uev', 25, 26, 'User', 23, 'Events', 34, 1), '<div data-w="5"></div>') +
  ug(ub(0, 68, 'uiex', 23, 25, 'UI', 11, 'Explorer', 42)) + ug(ub(0, 72, 'rem', 25, 25, 'Remove', 43, 'Unused', 38, 1)) + ug(ub(0, 62, 'ana', 25, 25, 'Analyze', 40, 'File', 17, 1)) +
  ug(ub(0, 80, 'test', 20, 25, 'Test', 21, 'Manager', 46, 1)) + ug(ub(0, 64, 'xls', 22, 24, 'Export', 34, 'to Excel', 40)) + ug(ub(0, 58, 'pub', 24, 25, 'Publish', 38, '', 0, 1)) +
  ic('caretw', 11, 7, 0, 'ribend');

/* project tree: folder, file and dependency rows */
const F = (t, w) => ic('chevr', 5, 9, 30) + ic('br', 8, 8, 10) + ic('folder', 16, 14, 3) + ft(t, w, 5);
const U = (t, w, i = 'uif') => ic('br', 8, 8, 45) + ic(i, 15, 16, 3) + ft(t, w, 6);
const D = (t, w) => ic('chevr', 5, 9, 50) + ic('dep', 16, 15, 20) + ft(t, w, 5);
const rowsT = [
  ic('chev', 8, 5, 8) + ic('pen', 8, 9, 8) + ic('hex', 15, 17, 4) + ft('OEC_SR_ServiceRequests_Dispatcher', 191, 6),
  ic('chev', 8, 5, 28) + ic('deps', 14, 15, 20) + ft('Dependencies (Windows - Legacy)', 181, 6),
  D('UiPath.Excel.Activities = 2.10.4', 157), D('UiPath.System.Activities = 21.4.1', 173), D('UiPath.UIAutomation.Activities = 21.4.4', 213), D('UiPath.WebAPI.Activities = 1.7.0', 165), D('UiPathTeam.SharePoint.Activities = 1.6.2', 218),
  ic('ent', 16, 16, 54) + ft('Entities', 38, 6), ic('tmpl', 16, 14, 54) + ft('Templates', 53, 6),
  F('.settings', 44), F('.tmh', 24), F('Components', 69), F('Data', 25), F('Documentation', 82), F('Exceptions_Screenshots', 124), F('Framework', 59), F('Tests', 26),
  U('LoadtoQueue_GermanSales.xaml', 172), U('LoadtoQueue.xaml', 100), U('<b>Main.xaml</b>', 60, 'uifm'), U('OEC_Germany - Download LookUp Table.xaml', 235), U('OEC_Germany - Download LookUp Table2.xaml', 241), U('Process.xaml', 68), U('project.json', 62, 'json')];
$('tree').innerHTML = rowsT.map(r => `<div class="tr">${r}</div>`).join('');

/* workflow canvas, coordinates relative to the studio window */
const OX = 271, OY = 165;
const at = (x, y, w, h) => `style="left:${x - OX}px;top:${y - OY}px;width:${w}px;${h ? `height:${h}px` : ''}"`;
const node = (x, y, w, h, icn, t, tw, lines, cls = '') => `<div class="node ${cls}" ${at(x, y, w, h)}><div class="nh">${ic(icn, 16, 16)}${ft(t, tw, 6)}</div><div class="nb">${lines.map(l => `<div>${ft(l[0], l[1])}</div>`).join('')}</div>${cls ? '' : ic('enter', 18, 15, 0, 'corner') + ic('grips', 9, 9, 0, 'grips')}</div>`;
const pill = (x, y, w, t, tw) => `<div class="pill" ${at(x, y, w)}>${ft(t, tw)}</div>`;
const arrow = (x, y, d) => `<path stroke="none" fill="#a9abad" d="M${x} ${y}${{ r: 'l-10-5v10z', l: 'l10-5v10z', d: 'l-5-10h10z', u: 'l-5 10h10z' }[d]}"/>`;
$('canvas').innerHTML =
  node(633, 195, 688, 770, 'flow', 'General Business Process', 131, [['[Process title]', 69], ['[Process description]', 108], ['[Additional information (e.g., author, contact information and applications involved and required external setup)]', 591]], 'outer open') +
  `<span class="dbl" ${at(1306, 201, 10)}>${ic('dblup', 10, 10)}</span>` +
  `<svg class="wires" width="1413" height="791" viewBox="${OX} ${OY} 1413 791" fill="none" stroke="#d0d2d8" stroke-width="2"><path d="M780 344h86" stroke="#d3dbe8"/><path d="M999 399v97M999 424q0 3-3 3H735q-3 0-3 3v54M999 612v27q0 3-3 3H742q-3 0-3-3v-15M996 642h-4q-3 0-3 3v158M1136 350h17q3 0 3 3v606M1134 531h19q2 0 2 3M1134 577h19q2 0 2 3"/>${arrow(872, 344, 'r')}${arrow(732, 493, 'd')}${arrow(999, 496.5, 'l')}${arrow(739, 617, 'u')}${arrow(989, 812, 'd')}${arrow(1127, 350, 'l')}${arrow(1126, 531, 'l')}${arrow(1126, 577, 'l')}</svg>` +
  `<div class="node start" ${at(720, 308, 60, 75)}>${ic('startc', 40, 41)}${ft('Start', 24)}</div>` +
  node(873, 292, 255, 107, 'state', 'Initialization', 62, [['Read configuration file and initialize', 187], ['applications used in the process.', 171]]) +
  node(669, 494, 144, 124, 'stend', 'End Process', 63, [['End process and', 88], ['close all', 41], ['applications used.', 95]]) +
  node(875, 498, 252, 115, 'state', 'Get Transaction Data', 108, [['Get the next transaction to be', 156], ['processed.', 56]]) +
  node(875, 812, 231, 160, 'state', 'Process Transaction', 102, [['Process a single transaction.', 147], ['The result of the processing can be:', 187], ['1) Success, 2) Business Exception, 3)', 188], ['System Exception.', 94], ['In the case of a system exception,', 177], ['the transaction can be automatically', 189], ['retried.', 36]], 'open') +
  `<svg class="wires" width="1413" height="791" viewBox="${OX} ${OY} 1413 791" fill="#f4f6f6" stroke="#cfd1d3" stroke-width="1.500"><circle cx="999" cy="398" r="5"/><circle cx="999" cy="612" r="5"/></svg>` +
  pill(822, 416, 90, 'System Excep...', 81) + pill(844, 631, 54, 'No Data', 44) + pill(945, 715, 90, 'New Transacti...', 80) + pill(1112, 683, 90, 'System Excep...', 80) + pill(1111, 774, 90, 'Business Exce...', 80) + pill(1131, 791, 51, 'Success', 41);

/* worksheet */
const names = 'I J K L M N O P Q R S T U V W X Y Z AA AB AC AD AE AF AG AH AI AJ AK AL AM AN AO'.split(' ');
const widths = [84, 110, 83, 94, 81, 62, 88, 88, 88].concat(Array(24).fill(45));
const cells = {};
const put = (r, line) => line.split(';').forEach(s => { const [c, t, w, k] = s.split('|'); (cells[r] = cells[r] || {})[c] = { t, w, k: k || '' }; });
put(5, 'I|Lookup CCR||hd;J|Transaction Queue||hd;K|Account in Lookup||hd;L|Assign Queue||hd;M|SR||hd;N|Account||hd;O|Expected Result||hd;P|Actual Result||hd;Q|Message||hd;R|Comments|57|hdx');
put(6, 'I|N;J|Y;K|Y;L|Y;M|SR0003010295|72;N|659238|36|tri;O|Pass (AssignTo)|74;P|Pass||ok;Q|AppliedPatch_AssignTo: ...|123');
put(7, 'I|N;J|Y;K|Y;L|Y;M|SR0003010297|72;N|113709|33|tri;O|Pass (OnlyQueue)|84;P|Pass||ok;Q|AppliedPatch_OnlyQueue: ...|133');
put(8, 'I|Y;J|Y;K|Y;L|Y;M|SR0003010298|72;N|752035|36|tri;O|Pass (CCRAssignTo)|92;P|Pass||ok;Q|AppliedPatch_CCRAssignTo: ...|145');
put(9, 'I|N;J|Y;K|Y;L|Y;M|SR0003010299|72;N|312243|34|tri;O|Pass(AssignTo)|72;P|Pass||ok;Q|AppliedPatch_AssignTo: ...|123');
put(10, 'I|||g;J|Y;K|Y;L|Y;M|SR0003010301|71;N|767016|34|tri;O|Fail;P|Fail||ok;Q|Reason: OEC SR Assign To already updated, and OEC SR Customer Care Rep already updated. Queue Information: Oracle SR Testing Only, Melanie Palomba.|719');
put(11, 'I|||g;J|Y;K|Y;L|Y;M|SR0003010303|72;N|N/A;O|Fail;P|Fail||ok;Q|Reason: SR Status is already updated.|175');
put(12, 'I|N;J|Y;K|N;L|||g;M|SR0003011485|70;N|223897|36;O|Fail;P|Fail||ok;Q|Reason: No matching Account Number on the lookup table. Account Number: 223897|392');
put(13, 'I|N;J|Y;K|Y;L|N;M|SR0003011486|70;N|F34444|36;O|Fail;P|Fail||ok;Q|Reason: SR Failed to update. Assigned Queue does not exist in OEC. Lookup information: SR0003011486, .|486');
put(14, 'I|N;J|N;K|||g;L|||g;O|Fail;P|Fail||ok;Q|Throw (Application): No matching queue on the lookup table. Queue Name: Oracle SR Testing Only|449');
put(15, 'I|||g;J|Y;K|Y;L|Y;M|SR0003010304|72;N|K99581|36;O|Fail;P|Fail||ok;Q|Reason: Queue changed after Dispatcher run.|211');
put(16, 'I|Y;J|Y;K|Y;L|Y;M|SR0003010293|72;N|F18106|33;O|Pass(CCR)|50;Q|AppliedPatch_CCR: ...|101');
const note = '*cannot do due to OEC interface ... automatically updates CCR when Assign To is populated / cannot be overridden ... update workflow to analyze Assign To first? ... when Assign To, updates to In Progress / can be overriden by updating to New';
[18, 19].forEach(r => put(r, `I|Y;J|||g;K|||g;L|||g;O|Pass;R|${note}|1086`));
put(24, 'J|CCRAssignTo|64;R|To Do:|29');
put(25, 'J|OnlyQueue|53;R|Enable SharePoint activities (running again?)|205');
put(26, 'R|Check final 3 test cases (how?)|141');
put(27, 'R|Assess SetTransaction outputs (ok?)|168');
put(28, 'R|Ensure messages are acceptable (enough info?)|222');
put(30, 'J|CurrentQueue|66;L|AssignQueue|63;M|CCR|22;N|Assign To|45');
const O = 'Oracle SR Testing Only|106', MP = 'Melanie Palomba|79';
put(31, `J|${O};K|F18106|33;L|${O};M|${MP}`);
put(32, `J|${O};K|659238|36|tri;L|${O};N|${MP}`);
put(33, `J|${O};K|752035|36|tri;L|${O};M|${MP};N|${MP}`);
put(34, `J|${O};K|K99581|36;L|${O}`);
put(35, `J|${O};K|272874|36|tri;L|${O}`);
put(36, `J|${O};K|767016|34|tri;L|${O}`);
put(37, `J|${O};K|312243|34|tri;L|${O};N|${MP}`);
put(38, `J|${O};K|113709|33|tri;L|${O}`);
put(39, `J|${O};K|F34444|36`);
let sh = `<div class="cols"><span data-w="26"></span>${names.map((n, i) => `<span data-w="${widths[i]}">${n}</span>`).join('')}</div>`;
for (let r = 4; r <= 58; r++) {
  const row = cells[r] || {};
  sh += `<div class="row r${r}"><div class="rn">${r}</div>` + names.map((n, i) => {
    const c = row[n];
    if (!c) return `<div class="c" data-w="${widths[i]}"></div>`;
    const nx = row[names[i + 1]];
    const k = c.k === 'hdx' ? 'hd' : c.k;
    const txt = c.w ? ft(c.t, c.w) : c.t;
    const body = c.k === 'hd' ? `<span class="tx">${c.t}</span><span class="fb">${ic('down', 5, 3)}</span>` : txt;
    return `<div class="c ${k} ${nx || c.k === 'hd' ? 'cut' : ''}" data-w="${widths[i]}">${body}</div>`;
  }).join('') + '</div>';
}
$('sheet').innerHTML = sh;

/* sizes, icons, then text fitting */
document.querySelectorAll('[data-w],[data-m],[data-h]').forEach(e => {
  const d = e.dataset;
  if (d.w) e.style.width = d.w + 'px';
  if (d.h) e.style.height = d.h + 'px';
  if (d.m && d.m !== '0') e.style.marginLeft = d.m + 'px';
  if (d.i && ICONS[d.i]) e.innerHTML = ICONS[d.i];
});
const fitAll = () => document.querySelectorAll('.f').forEach(e => {
  if (!e.querySelector(':scope>.in')) e.innerHTML = `<span class="in">${e.innerHTML}</span>`;
  const s = e.firstElementChild;
  s.style.transform = 'none';
  const k = e.getBoundingClientRect().width / s.getBoundingClientRect().width;
  s.style.transform = `scaleX(${k})`;
});
fitAll();
document.fonts.ready.then(fitAll);
```
